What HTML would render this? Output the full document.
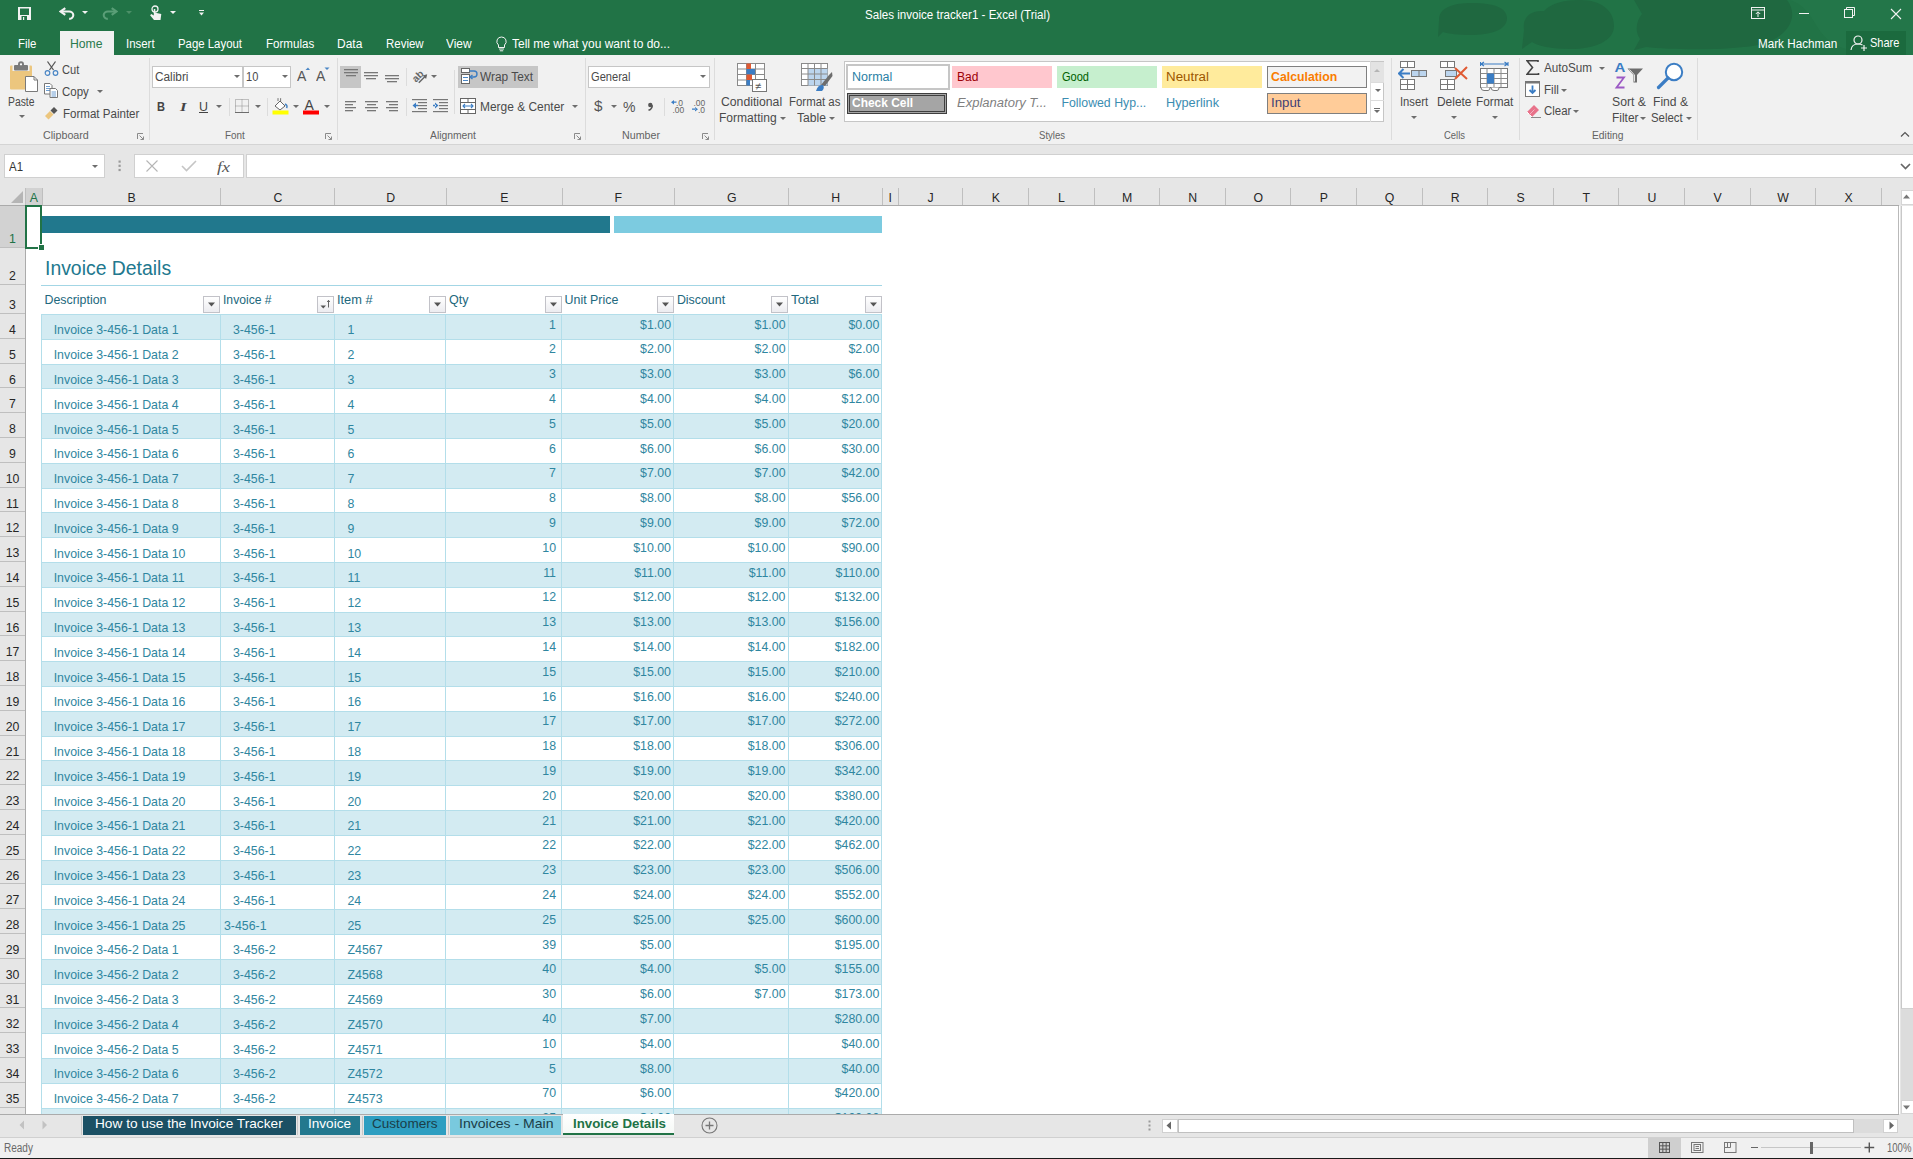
<!DOCTYPE html>
<html><head><meta charset="utf-8"><title>Sales invoice tracker1 - Excel</title>
<style>
html,body{margin:0;padding:0;}
body{width:1913px;height:1159px;overflow:hidden;position:relative;background:#fff;font-family:'Liberation Sans',sans-serif;}
svg{display:block;}
</style></head><body>
<div style="position:absolute;left:0px;top:0px;width:1913px;height:55px;background:#217346;"></div><svg style="position:absolute;left:1380px;top:0px;" width="533" height="55" viewBox="0 0 533 55">
<g fill="#1f6840">
<path d="M59 20 C59 7 74 3 92 3 C114 3 127 8 127 18 C127 30 111 35 90 35 C78 35 69 34 63 32 L58 37 Z"/>
<path d="M144 30 C142 16 152 10 164 11 C171 3 185 0 200 0 C222 0 234 11 234 26 C234 41 215 49 190 49 C171 49 158 46 152 42 L142 49 Z"/>
<path d="M254 0 L407 0 C418 14 412 34 384 44 C352 51 292 50 266 47 L254 50 L260 39 C254 30 257 20 262 14 Z"/>
</g>
<g fill="#25784a" opacity="0.7"><path d="M410 0 C440 10 430 40 470 50 L533 55 L533 0 Z"/></g>
</svg><svg style="position:absolute;left:17px;top:6px;" width="15" height="15" viewBox="0 0 15 15"><path d="M1 1h13v13H1z" fill="#f2f2f2"/><rect x="3" y="2.5" width="9" height="6.5" fill="#217346"/><rect x="4.5" y="10" width="5.5" height="4" fill="#217346"/><rect x="6" y="11" width="1.2" height="3" fill="#f2f2f2"/></svg><svg style="position:absolute;left:59px;top:7px;" width="16" height="14" viewBox="0 0 16 14"><path d="M6.3 1.2 L1.6 4.5 L6.3 7.8" stroke="#f2f2f2" stroke-width="2.1" fill="none" stroke-linejoin="miter"/><path d="M2 4.5 H10 A4.2 3.7 0 0 1 10.2 11.9" stroke="#f2f2f2" stroke-width="2.1" fill="none"/></svg><svg style="position:absolute;left:82px;top:11px;" width="7" height="4" viewBox="0 0 7 4"><path d="M0 0h6L3 3z" fill="#f2f2f2"/></svg><svg style="position:absolute;left:102px;top:7px;" width="16" height="14" viewBox="0 0 16 14"><g transform="translate(16 0) scale(-1 1)"><path d="M6.3 1.2 L1.6 4.5 L6.3 7.8" stroke="#5a9e77" stroke-width="2.1" fill="none"/><path d="M2 4.5 H10 A4.2 3.7 0 0 1 10.2 11.9" stroke="#5a9e77" stroke-width="2.1" fill="none"/></g></svg><svg style="position:absolute;left:126px;top:11px;" width="7" height="4" viewBox="0 0 7 4"><path d="M0 0h6L3 3z" fill="#4d9068"/></svg><svg style="position:absolute;left:149px;top:5px;" width="13" height="16" viewBox="0 0 13 16"><circle cx="6" cy="4" r="3" stroke="#f2f2f2" stroke-width="1.3" fill="none"/><path d="M4.8 4 v6.5 l-2.5-1.5 -1.2 1.2 L5 15 h6.5 l0.8-6 -6-1.2 V4z" fill="#f2f2f2"/></svg><svg style="position:absolute;left:170px;top:11px;" width="7" height="4" viewBox="0 0 7 4"><path d="M0 0h6L3 3z" fill="#f2f2f2"/></svg><svg style="position:absolute;left:199px;top:10px;" width="6" height="7" viewBox="0 0 6 7"><rect x="0" y="0" width="5" height="1" fill="#f2f2f2"/><path d="M0 2.5h5L2.5 5.5z" fill="#f2f2f2"/></svg><svg style="position:absolute;left:1751px;top:7px;" width="15" height="12" viewBox="0 0 15 12"><rect x="0.5" y="0.5" width="13" height="11" stroke="#f2f2f2" fill="none"/><line x1="0.5" y1="3" x2="13.5" y2="3" stroke="#f2f2f2"/><path d="M7 10 V5 M4.8 7 L7 4.8 9.2 7" stroke="#f2f2f2" fill="none"/></svg><div style="position:absolute;left:1799px;top:13px;width:10px;height:1px;background:#f2f2f2;"></div><svg style="position:absolute;left:1844px;top:7px;" width="12" height="12" viewBox="0 0 12 12"><rect x="0.5" y="2.5" width="8" height="8" stroke="#f2f2f2" fill="none"/><path d="M2.5 2.5 V0.5 H10.5 V8.5 H8.5" stroke="#f2f2f2" fill="none"/></svg><svg style="position:absolute;left:1890px;top:8px;" width="12" height="12" viewBox="0 0 12 12"><path d="M1 1 L11 11 M11 1 L1 11" stroke="#f2f2f2" stroke-width="1.1"/></svg><div style="position:absolute;left:60px;top:31px;width:54px;height:24px;background:#f1f1f1;"></div><svg style="position:absolute;left:495px;top:36px;" width="13" height="16" viewBox="0 0 13 16"><path d="M6.5 1 A4.5 4.5 0 0 0 3.5 9 V11.5 H9.5 V9 A4.5 4.5 0 0 0 6.5 1 Z" stroke="#f2f2f2" stroke-width="1" fill="none"/><path d="M4 13 H9 M4.8 14.8 H8.2" stroke="#f2f2f2" stroke-width="1"/></svg><div style="position:absolute;left:1846px;top:31px;width:59.6px;height:24px;background:#1b6a3e;"></div><svg style="position:absolute;left:1850px;top:34px;" width="19" height="18" viewBox="0 0 19 18"><circle cx="8" cy="6" r="4" stroke="#f2f2f2" stroke-width="1.2" fill="none"/><path d="M1 16 C1.5 11.5 4 10 8 10 C10 10 11.5 10.4 12.5 11" stroke="#f2f2f2" stroke-width="1.2" fill="none"/><path d="M14 11 v6 M11 14 h6" stroke="#f2f2f2" stroke-width="1.2"/></svg><div style="position:absolute;left:0px;top:55px;width:1913px;height:89px;background:#f1f1f1;"></div><div style="position:absolute;left:0px;top:144px;width:1913px;height:1px;background:#d4d4d4;"></div><svg style="position:absolute;left:9px;top:61px;" width="30" height="31" viewBox="0 0 30 31"><rect x="1" y="4.5" width="22" height="24" rx="1" fill="#ecc67e"/><rect x="3.5" y="3" width="17" height="7" fill="#f1f1f1"/><rect x="5" y="4" width="14" height="5.5" rx="1" fill="#7a7a7a"/><circle cx="12" cy="3.2" r="3" fill="#7a7a7a"/><circle cx="12" cy="3.3" r="1.1" fill="#ffffff"/>
<path d="M16.5 15.5 H25 L28.5 19 V30.5 H16.5 Z" fill="#fff" stroke="#7a7a7a" stroke-width="1"/><path d="M25 15.5 V19 H28.5" fill="none" stroke="#7a7a7a" stroke-width="1"/></svg><svg style="position:absolute;left:18.5px;top:115.0px;" width="6" height="4" viewBox="0 0 6 4"><path d="M0 0h6L3 3z" fill="#6d6d6d"/></svg><svg style="position:absolute;left:44px;top:61px;" width="15" height="15" viewBox="0 0 15 15"><path d="M3.5 0.5 L9.5 9 M11.5 0.5 L5.5 9" stroke="#555" stroke-width="1.3"/><circle cx="3.5" cy="12" r="2.3" stroke="#4a86c5" stroke-width="1.2" fill="none"/><circle cx="11.5" cy="12" r="2.3" stroke="#4a86c5" stroke-width="1.2" fill="none"/></svg><svg style="position:absolute;left:44px;top:83px;" width="15" height="15" viewBox="0 0 15 15"><path d="M0.5 0.5H6L8 2.5V11H0.5Z" fill="#fff" stroke="#777"/><path d="M2 3.5h4 M2 5.5h4 M2 7.5h4" stroke="#4a86c5" stroke-width="0.8"/><path d="M6 5.5H11.5L13.5 7.5V14.5H6Z" fill="#fff" stroke="#777"/><path d="M7.5 9h4.5 M7.5 11h4.5 M7.5 13h4.5" stroke="#4a86c5" stroke-width="0.8"/></svg><svg style="position:absolute;left:97px;top:89.5px;" width="6" height="4" viewBox="0 0 6 4"><path d="M0 0h6L3 3z" fill="#6d6d6d"/></svg><svg style="position:absolute;left:44px;top:107px;" width="15" height="13" viewBox="0 0 15 13"><path d="M1 9 L6 4 L9.5 7.5 L4.5 12.5 Z" fill="#ecc67e"/><path d="M6.5 3.5 L10 7 L13.5 3.5 L10 0 Z" fill="#555"/></svg><svg style="position:absolute;left:137px;top:133px;" width="7" height="7" viewBox="0 0 7 7"><path d="M0.5 6V0.5H6" stroke="#8a8a8a" fill="none"/><path d="M2.5 2.5L6.5 6.5M6.5 3.5V6.5H3.5" stroke="#8a8a8a" fill="none"/></svg><div style="position:absolute;left:148.5px;top:58px;width:1px;height:82px;background:#dcdcdc;"></div><div style="position:absolute;left:152px;top:66px;width:91px;height:22px;background:#ffffff;box-sizing:border-box;border:1px solid #c6c6c6;"></div><div style="position:absolute;left:243px;top:66px;width:48px;height:22px;background:#ffffff;box-sizing:border-box;border:1px solid #c6c6c6;"></div><svg style="position:absolute;left:233.7px;top:74.5px;" width="6" height="4" viewBox="0 0 6 4"><path d="M0 0h6L3 3z" fill="#6d6d6d"/></svg><svg style="position:absolute;left:281.6px;top:74.5px;" width="6" height="4" viewBox="0 0 6 4"><path d="M0 0h6L3 3z" fill="#6d6d6d"/></svg><svg style="position:absolute;left:297px;top:67px;" width="13" height="14" viewBox="0 0 13 14"><text x="0" y="13.5" font-family="Liberation Sans" font-size="14" fill="#555">A</text><path d="M8.5 3 L11 0.5 L13 3Z" fill="#4a86c5"/></svg><svg style="position:absolute;left:316px;top:67px;" width="14" height="14" viewBox="0 0 14 14"><text x="0" y="13.5" font-family="Liberation Sans" font-size="14" fill="#555">A</text><path d="M8.5 0.5 L11 3 L13.5 0.5Z" fill="#4a86c5"/></svg><div style="position:absolute;left:199px;top:112px;width:9px;height:1px;background:#444;"></div><svg style="position:absolute;left:216px;top:104.5px;" width="6" height="4" viewBox="0 0 6 4"><path d="M0 0h6L3 3z" fill="#6d6d6d"/></svg><div style="position:absolute;left:228.5px;top:98px;width:1px;height:18px;background:#dcdcdc;"></div><svg style="position:absolute;left:235px;top:99px;" width="14" height="14" viewBox="0 0 14 14"><path d="M0.5 0.5H13.5V13.5H0.5Z M7 0.5V13.5 M0.5 7H13.5" stroke="#8a8a8a" stroke-dasharray="1 1" fill="none"/><path d="M0 13.5H14" stroke="#6d6d6d"/></svg><svg style="position:absolute;left:254.5px;top:104.5px;" width="6" height="4" viewBox="0 0 6 4"><path d="M0 0h6L3 3z" fill="#6d6d6d"/></svg><div style="position:absolute;left:266.5px;top:98px;width:1px;height:18px;background:#dcdcdc;"></div><svg style="position:absolute;left:272px;top:98px;" width="18" height="17" viewBox="0 0 18 17"><path d="M3 8 L8 3 L13 8 L8 12 Z" fill="#fff" stroke="#666" stroke-width="1"/><path d="M6 3 V0.5 a1.3 1.3 0 0 1 2.6 0 V4" stroke="#666" fill="none" stroke-width="0.9"/><path d="M13 6 Q16 7.5 14.5 10" stroke="#4a86c5" stroke-width="1.6" fill="none"/><rect x="0.5" y="12.5" width="16" height="4" fill="#ffff00"/></svg><svg style="position:absolute;left:293px;top:104.5px;" width="6" height="4" viewBox="0 0 6 4"><path d="M0 0h6L3 3z" fill="#6d6d6d"/></svg><svg style="position:absolute;left:303px;top:98px;" width="17" height="17" viewBox="0 0 17 17"><text x="1.5" y="12" font-family="Liberation Sans" font-size="14" fill="#444">A</text><rect x="0" y="12.5" width="16" height="4" fill="#ff0000"/></svg><svg style="position:absolute;left:324px;top:104.5px;" width="6" height="4" viewBox="0 0 6 4"><path d="M0 0h6L3 3z" fill="#6d6d6d"/></svg><svg style="position:absolute;left:325px;top:133px;" width="7" height="7" viewBox="0 0 7 7"><path d="M0.5 6V0.5H6" stroke="#8a8a8a" fill="none"/><path d="M2.5 2.5L6.5 6.5M6.5 3.5V6.5H3.5" stroke="#8a8a8a" fill="none"/></svg><div style="position:absolute;left:336.5px;top:58px;width:1px;height:82px;background:#dcdcdc;"></div><div style="position:absolute;left:340px;top:66px;width:21px;height:22px;background:#c6c6c6;"></div><svg style="position:absolute;left:344px;top:69px;" width="16" height="10" viewBox="0 0 16 10"><rect x="0" y="0" width="14" height="1.3" fill="#777"/><rect x="0" y="3" width="14" height="1.3" fill="#777"/><rect x="2" y="6" width="10" height="1.3" fill="#777"/></svg><svg style="position:absolute;left:364px;top:72px;" width="16" height="10" viewBox="0 0 16 10"><rect x="0" y="0" width="14" height="1.3" fill="#777"/><rect x="0" y="3" width="14" height="1.3" fill="#777"/><rect x="2" y="6" width="10" height="1.3" fill="#777"/></svg><svg style="position:absolute;left:385px;top:75px;" width="16" height="10" viewBox="0 0 16 10"><rect x="0" y="0" width="14" height="1.3" fill="#777"/><rect x="0" y="3" width="14" height="1.3" fill="#777"/><rect x="2" y="6" width="10" height="1.3" fill="#777"/></svg><div style="position:absolute;left:405.7px;top:68px;width:1px;height:18px;background:#dcdcdc;"></div><svg style="position:absolute;left:411px;top:68px;" width="18" height="17" viewBox="0 0 18 17"><text x="1" y="12.2" font-family="Liberation Sans" font-size="10" font-weight="700" fill="#666" transform="rotate(-45 6 8.5)">ab</text><path d="M7.8 14.8 L14.5 8" stroke="#666" stroke-width="1.5"/><path d="M16.2 6.3 L11.6 7.4 L15.1 10.9 Z" fill="#666"/></svg><svg style="position:absolute;left:430.5px;top:74.5px;" width="6" height="4" viewBox="0 0 6 4"><path d="M0 0h6L3 3z" fill="#6d6d6d"/></svg><svg style="position:absolute;left:344.5px;top:101px;" width="16" height="13" viewBox="0 0 16 13"><rect x="0" y="0" width="11" height="1.3" fill="#777"/><rect x="0" y="3" width="8" height="1.3" fill="#777"/><rect x="0" y="6" width="11" height="1.3" fill="#777"/><rect x="0" y="9" width="8" height="1.3" fill="#777"/></svg><svg style="position:absolute;left:364.5px;top:101px;" width="16" height="13" viewBox="0 0 16 13"><rect x="0" y="0" width="13" height="1.3" fill="#777"/><rect x="2" y="3" width="9" height="1.3" fill="#777"/><rect x="0" y="6" width="13" height="1.3" fill="#777"/><rect x="2" y="9" width="9" height="1.3" fill="#777"/></svg><svg style="position:absolute;left:386px;top:101px;" width="16" height="13" viewBox="0 0 16 13"><rect x="0" y="0" width="12" height="1.3" fill="#777"/><rect x="3" y="3" width="9" height="1.3" fill="#777"/><rect x="0" y="6" width="12" height="1.3" fill="#777"/><rect x="3" y="9" width="9" height="1.3" fill="#777"/></svg><div style="position:absolute;left:405.8px;top:98px;width:1px;height:18px;background:#dcdcdc;"></div><svg style="position:absolute;left:412px;top:99px;" width="16" height="14" viewBox="0 0 16 14"><rect x="0" y="0" width="15" height="1.2" fill="#777"/><rect x="6" y="3" width="9" height="1.2" fill="#777"/><rect x="6" y="6" width="9" height="1.2" fill="#777"/><rect x="6" y="9" width="9" height="1.2" fill="#777"/><rect x="0" y="12" width="15" height="1.2" fill="#777"/><path d="M0.5 6.5 L4 3.5 V9.5Z M3 5.8h3v1.4h-3z" fill="#3b7dc4"/></svg><svg style="position:absolute;left:433px;top:99px;" width="16" height="14" viewBox="0 0 16 14"><rect x="0" y="0" width="15" height="1.2" fill="#777"/><rect x="6" y="3" width="9" height="1.2" fill="#777"/><rect x="6" y="6" width="9" height="1.2" fill="#777"/><rect x="6" y="9" width="9" height="1.2" fill="#777"/><rect x="0" y="12" width="15" height="1.2" fill="#777"/><path d="M5.5 6.5 L2 3.5 V9.5Z M0 5.8h3v1.4h-3z" fill="#3b7dc4"/></svg><div style="position:absolute;left:454.4px;top:70px;width:1px;height:44px;background:#dcdcdc;"></div><div style="position:absolute;left:458px;top:66px;width:80px;height:22px;background:#c6c6c6;"></div><svg style="position:absolute;left:461px;top:68px;" width="17" height="17" viewBox="0 0 17 17"><rect x="0.5" y="0.5" width="8" height="4" fill="#fff" stroke="#666"/><rect x="0.5" y="6.5" width="8" height="9" fill="#fff" stroke="#666"/><path d="M2 9.5h5 M2 12.5h5" stroke="#4a86c5"/><path d="M8.5 3 H13 A3 3 0 0 1 13 9 H10" stroke="#3b7dc4" stroke-width="1.4" fill="none"/><path d="M11.5 7 L9 9 L11.5 11" stroke="#3b7dc4" stroke-width="1.4" fill="none"/></svg><svg style="position:absolute;left:460px;top:98px;" width="17" height="17" viewBox="0 0 17 17"><rect x="0.5" y="0.5" width="15" height="15" fill="#fff" stroke="#666"/><path d="M0.5 4.5H15.5 M0.5 11.5H15.5 M8 0.5V4.5 M8 11.5V15.5" stroke="#666"/><path d="M3 8H13 M5 6L3 8L5 10 M11 6L13 8L11 10" stroke="#3b7dc4" stroke-width="1.1" fill="none"/></svg><svg style="position:absolute;left:571.5px;top:104.5px;" width="6" height="4" viewBox="0 0 6 4"><path d="M0 0h6L3 3z" fill="#6d6d6d"/></svg><svg style="position:absolute;left:573.5px;top:133px;" width="7" height="7" viewBox="0 0 7 7"><path d="M0.5 6V0.5H6" stroke="#8a8a8a" fill="none"/><path d="M2.5 2.5L6.5 6.5M6.5 3.5V6.5H3.5" stroke="#8a8a8a" fill="none"/></svg><div style="position:absolute;left:584.5px;top:58px;width:1px;height:82px;background:#dcdcdc;"></div><div style="position:absolute;left:588px;top:66px;width:122px;height:22px;background:#ffffff;box-sizing:border-box;border:1px solid #c6c6c6;"></div><svg style="position:absolute;left:700px;top:74.5px;" width="6" height="4" viewBox="0 0 6 4"><path d="M0 0h6L3 3z" fill="#6d6d6d"/></svg><svg style="position:absolute;left:610.5px;top:104.5px;" width="6" height="4" viewBox="0 0 6 4"><path d="M0 0h6L3 3z" fill="#6d6d6d"/></svg><svg style="position:absolute;left:647px;top:102px;" width="7" height="9" viewBox="0 0 7 9"><circle cx="3.3" cy="3" r="2.2" fill="#555"/><path d="M5.3 3.2 Q5.3 7 1.5 8.3" stroke="#555" stroke-width="1.5" fill="none"/></svg><div style="position:absolute;left:664px;top:98px;width:1px;height:18px;background:#dcdcdc;"></div><svg style="position:absolute;left:671px;top:99px;" width="15" height="15" viewBox="0 0 15 15"><text x="5" y="6.5" font-family="Liberation Sans" font-size="8.5" fill="#666">.0</text><text x="1.5" y="14" font-family="Liberation Sans" font-size="8.5" fill="#666">.00</text><path d="M0 3.2 L3 1 V5.4Z M2.5 2.6h3v1.2h-3z" fill="#3b7dc4"/></svg><svg style="position:absolute;left:692px;top:99px;" width="15" height="15" viewBox="0 0 15 15"><text x="1.5" y="7" font-family="Liberation Sans" font-size="8.5" fill="#666">.00</text><text x="6" y="14" font-family="Liberation Sans" font-size="8.5" fill="#666">.0</text><path d="M6 10.2 L3 8 V12.4Z M0 9.6h3.5v1.2h-3.5z" fill="#3b7dc4"/></svg><svg style="position:absolute;left:702px;top:133px;" width="7" height="7" viewBox="0 0 7 7"><path d="M0.5 6V0.5H6" stroke="#8a8a8a" fill="none"/><path d="M2.5 2.5L6.5 6.5M6.5 3.5V6.5H3.5" stroke="#8a8a8a" fill="none"/></svg><div style="position:absolute;left:713.5px;top:58px;width:1px;height:82px;background:#dcdcdc;"></div><svg style="position:absolute;left:737px;top:63px;" width="32" height="30" viewBox="0 0 32 30"><g stroke="#8a8a8a" fill="#fff"><rect x="0.5" y="0.5" width="27" height="22"/></g>
<path d="M0.5 6h27 M0.5 11.5h27 M0.5 17h27 M9.5 0.5v22 M18.5 0.5v22" stroke="#8a8a8a"/>
<rect x="9.5" y="0.5" width="4.5" height="5.5" fill="#e05a33"/><rect x="9.5" y="6" width="8.5" height="5.5" fill="#3b7dc4"/><rect x="9.5" y="11.5" width="5.5" height="5.5" fill="#e05a33"/><rect x="9.5" y="17" width="3.5" height="5.5" fill="#3b7dc4"/>
<rect x="15.5" y="16.5" width="14" height="12" fill="#fff" stroke="#777"/><text x="18" y="27" font-family="Liberation Sans" font-size="11" fill="#555">≠</text></svg><svg style="position:absolute;left:780px;top:116.5px;" width="6" height="4" viewBox="0 0 6 4"><path d="M0 0h6L3 3z" fill="#6d6d6d"/></svg><svg style="position:absolute;left:801px;top:63px;" width="32" height="30" viewBox="0 0 32 30"><rect x="0.5" y="0.5" width="26" height="22" fill="#fff" stroke="#8a8a8a"/>
<rect x="7" y="5.5" width="19.5" height="17" fill="#bcd5ee"/>
<path d="M0.5 5.5h26 M0.5 11h26 M0.5 16.5h26 M7 0.5v22 M13.5 0.5v22 M20 0.5v22" stroke="#8a8a8a"/>
<path d="M20 22 L28 12 L31 9 L31.5 13 L24 23 Z" fill="#6d6d6d"/><path d="M15 28 Q17 21 22 22 Q24 25 21 28 Z" fill="#3b7dc4"/></svg><svg style="position:absolute;left:829px;top:116.5px;" width="6" height="4" viewBox="0 0 6 4"><path d="M0 0h6L3 3z" fill="#6d6d6d"/></svg><div style="position:absolute;left:844px;top:60.5px;width:540px;height:61px;background:#ffffff;box-sizing:border-box;border:1px solid #c6c6c6;"></div><div style="position:absolute;left:846px;top:64px;width:104px;height:26px;background:#ffffff;box-sizing:border-box;border:2px solid #c6c6c6;"></div><div style="position:absolute;left:952px;top:66px;width:100.2px;height:22px;background:#ffc7ce;"></div><div style="position:absolute;left:1057px;top:66px;width:100px;height:22px;background:#c6efce;"></div><div style="position:absolute;left:1161.8px;top:66px;width:100.1px;height:22px;background:#ffeb9c;"></div><div style="position:absolute;left:1266.6px;top:66px;width:100px;height:21.6px;background:#f2f2f2;box-sizing:border-box;border:1px solid #7f7f7f;"></div><div style="position:absolute;left:847px;top:92.8px;width:100px;height:21.2px;background:#a5a5a5;box-sizing:border-box;border:3px double #3f3f3f;"></div><div style="position:absolute;left:1266.6px;top:92.9px;width:100px;height:20.8px;background:#ffcc99;box-sizing:border-box;border:1px solid #7f7f7f;"></div><div style="position:absolute;left:1370.4px;top:60.5px;width:1px;height:61px;background:#dcdcdc;"></div><div style="position:absolute;left:1371px;top:61.5px;width:12.5px;height:20px;background:#e3e3e3;"></div><svg style="position:absolute;left:1374px;top:69px;" width="7" height="4" viewBox="0 0 7 4"><path d="M0 3h6L3 0z" fill="#b5b5b5"/></svg><div style="position:absolute;left:1371px;top:81.5px;width:12.5px;height:1px;background:#dcdcdc;"></div><svg style="position:absolute;left:1374.5px;top:89.0px;" width="6" height="4" viewBox="0 0 6 4"><path d="M0 0h6L3 3z" fill="#6d6d6d"/></svg><div style="position:absolute;left:1371px;top:99.5px;width:12.5px;height:1px;background:#dcdcdc;"></div><svg style="position:absolute;left:1374px;top:108px;" width="7" height="6" viewBox="0 0 7 6"><rect x="0" y="0" width="6" height="1" fill="#6d6d6d"/><path d="M0 2h6L3 5z" fill="#6d6d6d"/></svg><div style="position:absolute;left:1390.5px;top:58px;width:1px;height:82px;background:#dcdcdc;"></div><svg style="position:absolute;left:1398px;top:61px;" width="31" height="30" viewBox="0 0 31 30"><rect x="2.5" y="0.5" width="14" height="6" fill="#fff" stroke="#777"/><path d="M9.5 0.5v6" stroke="#777"/>
<rect x="13.5" y="9.5" width="15" height="6" fill="#bcd5ee" stroke="#777"/><path d="M21 9.5v6" stroke="#777"/>
<path d="M1 12.5 H12 M5.5 8 L1 12.5 L5.5 17" stroke="#3b7dc4" stroke-width="2" fill="none"/>
<rect x="2.5" y="18.5" width="14" height="10" fill="#fff" stroke="#777"/><path d="M9.5 18.5v10 M2.5 23.5h14" stroke="#777"/></svg><svg style="position:absolute;left:1410.7px;top:115.8px;" width="6" height="4" viewBox="0 0 6 4"><path d="M0 0h6L3 3z" fill="#6d6d6d"/></svg><svg style="position:absolute;left:1440px;top:61px;" width="32" height="30" viewBox="0 0 32 30"><rect x="0.5" y="0.5" width="14" height="6" fill="#fff" stroke="#777"/><path d="M7.5 0.5v6" stroke="#777"/>
<rect x="5.5" y="9.5" width="11" height="6" fill="#bcd5ee" stroke="#777"/>
<rect x="0.5" y="18.5" width="14" height="10" fill="#fff" stroke="#777"/><path d="M7.5 18.5v10 M0.5 23.5h14" stroke="#777"/>
<path d="M15 7 L27 18 M27 6 L15 18" stroke="#e05a33" stroke-width="2"/></svg><svg style="position:absolute;left:1450.6px;top:115.8px;" width="6" height="4" viewBox="0 0 6 4"><path d="M0 0h6L3 3z" fill="#6d6d6d"/></svg><svg style="position:absolute;left:1480px;top:61px;" width="30" height="30" viewBox="0 0 30 30"><path d="M0.5 1v4 M28 1v4 M1 3 H27.5 M4 1 L1 3 L4 5 M24.5 1 L27.5 3 L24.5 5" stroke="#3b7dc4" stroke-width="1.1" fill="none"/>
<rect x="0.5" y="7.5" width="27" height="19" fill="#fff" stroke="#777"/>
<path d="M0.5 12.5h27 M0.5 17.5h27 M0.5 22.5h27 M7 7.5v19 M14 7.5v19 M21 7.5v19" stroke="#8a8a8a"/>
<rect x="7" y="12.5" width="7" height="10" fill="#3b7dc4"/>
<path d="M1 26.5 Q1 29.5 4 29.5 H8 Q10 29.5 10 26.5 M11 26.5 Q11 29.5 14 29.5 H17 Q19 29.5 19 26.5" stroke="#777" fill="#fff"/></svg><svg style="position:absolute;left:1491.6px;top:115.8px;" width="6" height="4" viewBox="0 0 6 4"><path d="M0 0h6L3 3z" fill="#6d6d6d"/></svg><div style="position:absolute;left:1519.3px;top:58px;width:1px;height:82px;background:#dcdcdc;"></div><svg style="position:absolute;left:1526px;top:60px;" width="14" height="15" viewBox="0 0 14 15"><path d="M12 2 V0.8 H1 L6.5 7.5 L1 14.2 H12.5 V13" stroke="#444" stroke-width="1.6" fill="none"/></svg><svg style="position:absolute;left:1599px;top:66.5px;" width="6" height="4" viewBox="0 0 6 4"><path d="M0 0h6L3 3z" fill="#6d6d6d"/></svg><svg style="position:absolute;left:1525px;top:81px;" width="16" height="17" viewBox="0 0 16 17"><rect x="0.5" y="0.5" width="14" height="15" fill="#fff" stroke="#777"/><rect x="0.5" y="0.5" width="14" height="2" fill="#777"/><path d="M7.5 4.5 V12 M4.5 9 L7.5 12 L10.5 9" stroke="#3b7dc4" stroke-width="1.8" fill="none"/></svg><svg style="position:absolute;left:1561px;top:88.5px;" width="6" height="4" viewBox="0 0 6 4"><path d="M0 0h6L3 3z" fill="#6d6d6d"/></svg><svg style="position:absolute;left:1526px;top:103px;" width="16" height="15" viewBox="0 0 16 15"><path d="M1 9 L8 2 L13 7 L6 14 Z" fill="#e8728a"/><path d="M1 9 L6 14" stroke="#fff" stroke-width="1"/><path d="M3.5 11.5 L8.5 6.5" stroke="#f3b5c2" stroke-width="1"/><path d="M5 14.5 H15" stroke="#8a8a8a" stroke-width="1"/></svg><svg style="position:absolute;left:1573px;top:109.5px;" width="6" height="4" viewBox="0 0 6 4"><path d="M0 0h6L3 3z" fill="#6d6d6d"/></svg><svg style="position:absolute;left:1614px;top:62px;" width="31" height="28" viewBox="0 0 31 28"><text x="0.5" y="12.2" font-family="Liberation Sans" font-size="15" font-weight="700" fill="#3b7dc4" transform="scale(1 0.85)" style="transform-origin:0 0">A</text><path d="M2.5 15.5 H10 L2.5 25.5 H10.5" stroke="#9b59c4" stroke-width="1.8" fill="none"/>
<path d="M13.5 6.5 H29 L23 13 V20.5 H19.5 V13 Z" fill="#6d6d6d"/><path d="M15.5 7.5 L20.5 13 V19.5" stroke="#f1f1f1" stroke-width="0.9" fill="none"/></svg><svg style="position:absolute;left:1640px;top:116.5px;" width="6" height="4" viewBox="0 0 6 4"><path d="M0 0h6L3 3z" fill="#6d6d6d"/></svg><svg style="position:absolute;left:1656px;top:61px;" width="30" height="30" viewBox="0 0 30 30"><circle cx="18" cy="11" r="8.2" stroke="#3b7dc4" stroke-width="2" fill="#fff"/><path d="M12 17 L2.5 26.5" stroke="#3b7dc4" stroke-width="3.2" stroke-linecap="round"/></svg><svg style="position:absolute;left:1685.5px;top:116.5px;" width="6" height="4" viewBox="0 0 6 4"><path d="M0 0h6L3 3z" fill="#6d6d6d"/></svg><div style="position:absolute;left:1696.5px;top:58px;width:1px;height:82px;background:#dcdcdc;"></div><svg style="position:absolute;left:1900px;top:131px;" width="10" height="7" viewBox="0 0 10 7"><path d="M1 5.5 L5 1.5 L9 5.5" stroke="#555" stroke-width="1.2" fill="none"/></svg><div style="position:absolute;left:0px;top:145px;width:1913px;height:61px;background:#e6e6e6;"></div><div style="position:absolute;left:3.5px;top:154px;width:101px;height:23.6px;background:#ffffff;box-sizing:border-box;border:1px solid #d0d0d0;"></div><svg style="position:absolute;left:91.5px;top:164.5px;" width="6" height="4" viewBox="0 0 6 4"><path d="M0 0h6L3 3z" fill="#6d6d6d"/></svg><svg style="position:absolute;left:117.5px;top:160px;" width="4" height="12" viewBox="0 0 4 12"><rect x="0.5" y="0.5" width="2.2" height="2.2" fill="#9a9a9a"/><rect x="0.5" y="4.7" width="2.2" height="2.2" fill="#9a9a9a"/><rect x="0.5" y="8.9" width="2.2" height="2.2" fill="#9a9a9a"/></svg><div style="position:absolute;left:134px;top:154px;width:109.5px;height:23.6px;background:#ffffff;box-sizing:border-box;border:1px solid #d0d0d0;"></div><svg style="position:absolute;left:145px;top:159px;" width="14" height="14" viewBox="0 0 14 14"><path d="M1.5 1.5 L12.5 12.5 M12.5 1.5 L1.5 12.5" stroke="#b5b5b5" stroke-width="1.1"/></svg><svg style="position:absolute;left:181px;top:160px;" width="16" height="12" viewBox="0 0 16 12"><path d="M1 6 L5.5 10.5 L15 1" stroke="#c5c5c5" stroke-width="1.6" fill="none"/></svg><div style="position:absolute;left:246px;top:154px;width:1667px;height:23.6px;background:#ffffff;box-sizing:border-box;border:1px solid #d0d0d0;border-right:none;"></div><svg style="position:absolute;left:1900px;top:163px;" width="11" height="7" viewBox="0 0 11 7"><path d="M1 1 L5.5 5.5 L10 1" stroke="#666" stroke-width="1.7" fill="none"/></svg><div style="position:absolute;left:0px;top:205px;width:1899px;height:1px;background:#ababab;"></div><svg style="position:absolute;left:11px;top:191px;" width="13" height="12" viewBox="0 0 13 12"><path d="M12 0 V12 H0 Z" fill="#b5b5b5"/></svg><div style="position:absolute;left:25px;top:188px;width:16.5px;height:17px;background:#d2d2d2;"></div><div style="position:absolute;left:42px;top:188px;width:1px;height:17px;background:#bfbfbf;"></div><div style="position:absolute;left:220px;top:188px;width:1px;height:17px;background:#bfbfbf;"></div><div style="position:absolute;left:334px;top:188px;width:1px;height:17px;background:#bfbfbf;"></div><div style="position:absolute;left:446px;top:188px;width:1px;height:17px;background:#bfbfbf;"></div><div style="position:absolute;left:562px;top:188px;width:1px;height:17px;background:#bfbfbf;"></div><div style="position:absolute;left:674px;top:188px;width:1px;height:17px;background:#bfbfbf;"></div><div style="position:absolute;left:788px;top:188px;width:1px;height:17px;background:#bfbfbf;"></div><div style="position:absolute;left:882px;top:188px;width:1px;height:17px;background:#bfbfbf;"></div><div style="position:absolute;left:898px;top:188px;width:1px;height:17px;background:#bfbfbf;"></div><div style="position:absolute;left:962px;top:188px;width:1px;height:17px;background:#bfbfbf;"></div><div style="position:absolute;left:1028px;top:188px;width:1px;height:17px;background:#bfbfbf;"></div><div style="position:absolute;left:1094px;top:188px;width:1px;height:17px;background:#bfbfbf;"></div><div style="position:absolute;left:1159px;top:188px;width:1px;height:17px;background:#bfbfbf;"></div><div style="position:absolute;left:1225px;top:188px;width:1px;height:17px;background:#bfbfbf;"></div><div style="position:absolute;left:1290px;top:188px;width:1px;height:17px;background:#bfbfbf;"></div><div style="position:absolute;left:1356px;top:188px;width:1px;height:17px;background:#bfbfbf;"></div><div style="position:absolute;left:1422px;top:188px;width:1px;height:17px;background:#bfbfbf;"></div><div style="position:absolute;left:1487px;top:188px;width:1px;height:17px;background:#bfbfbf;"></div><div style="position:absolute;left:1553px;top:188px;width:1px;height:17px;background:#bfbfbf;"></div><div style="position:absolute;left:1618px;top:188px;width:1px;height:17px;background:#bfbfbf;"></div><div style="position:absolute;left:1684px;top:188px;width:1px;height:17px;background:#bfbfbf;"></div><div style="position:absolute;left:1750px;top:188px;width:1px;height:17px;background:#bfbfbf;"></div><div style="position:absolute;left:1815px;top:188px;width:1px;height:17px;background:#bfbfbf;"></div><div style="position:absolute;left:1881px;top:188px;width:1px;height:17px;background:#bfbfbf;"></div><div style="position:absolute;left:25px;top:188px;width:1px;height:17px;background:#bfbfbf;"></div><div style="position:absolute;left:1899.5px;top:188px;width:13.5px;height:926px;background:#e6e6e6;"></div><div style="position:absolute;left:1898px;top:206px;width:1px;height:908px;background:#b9b9b9;"></div><div style="position:absolute;left:1901px;top:189.5px;width:12px;height:15px;background:#ffffff;box-sizing:border-box;border:1px solid #d5d5d5;border-right:none;"></div><svg style="position:absolute;left:1903px;top:194px;" width="8" height="5" viewBox="0 0 8 5"><path d="M0 4.5h7L3.5 0.5z" fill="#777"/></svg><div style="position:absolute;left:1901px;top:206px;width:12px;height:803px;background:#ffffff;box-sizing:border-box;border-left:1px solid #c8c8c8;border-bottom:1px solid #d0d0d0;"></div><div style="position:absolute;left:1901px;top:1009px;width:12px;height:91px;background:#dcdcdc;"></div><div style="position:absolute;left:1901px;top:1100px;width:12px;height:14px;background:#ffffff;box-sizing:border-box;border:1px solid #d5d5d5;border-right:none;"></div><svg style="position:absolute;left:1903px;top:1105px;" width="8" height="5" viewBox="0 0 8 5"><path d="M0 0.5h7L3.5 4.5z" fill="#777"/></svg><div style="position:absolute;left:25px;top:206px;width:1873px;height:908px;background:#ffffff;"></div><div style="position:absolute;left:0px;top:206px;width:25px;height:908px;background:#e6e6e6;"></div><div style="position:absolute;left:25px;top:206px;width:1px;height:908px;background:#ababab;"></div><div style="position:absolute;left:0px;top:206px;width:25px;height:41.5px;background:#d2d2d2;"></div><div style="position:absolute;left:0px;top:247px;width:25px;height:1px;background:#bfbfbf;"></div><div style="position:absolute;left:0px;top:284px;width:25px;height:1px;background:#bfbfbf;"></div><div style="position:absolute;left:0px;top:313px;width:25px;height:1px;background:#bfbfbf;"></div><div style="position:absolute;left:0px;top:338px;width:25px;height:1px;background:#bfbfbf;"></div><div style="position:absolute;left:0px;top:363px;width:25px;height:1px;background:#bfbfbf;"></div><div style="position:absolute;left:0px;top:387px;width:25px;height:1px;background:#bfbfbf;"></div><div style="position:absolute;left:0px;top:412px;width:25px;height:1px;background:#bfbfbf;"></div><div style="position:absolute;left:0px;top:437px;width:25px;height:1px;background:#bfbfbf;"></div><div style="position:absolute;left:0px;top:462px;width:25px;height:1px;background:#bfbfbf;"></div><div style="position:absolute;left:0px;top:487px;width:25px;height:1px;background:#bfbfbf;"></div><div style="position:absolute;left:0px;top:511px;width:25px;height:1px;background:#bfbfbf;"></div><div style="position:absolute;left:0px;top:536px;width:25px;height:1px;background:#bfbfbf;"></div><div style="position:absolute;left:0px;top:561px;width:25px;height:1px;background:#bfbfbf;"></div><div style="position:absolute;left:0px;top:586px;width:25px;height:1px;background:#bfbfbf;"></div><div style="position:absolute;left:0px;top:611px;width:25px;height:1px;background:#bfbfbf;"></div><div style="position:absolute;left:0px;top:635px;width:25px;height:1px;background:#bfbfbf;"></div><div style="position:absolute;left:0px;top:660px;width:25px;height:1px;background:#bfbfbf;"></div><div style="position:absolute;left:0px;top:685px;width:25px;height:1px;background:#bfbfbf;"></div><div style="position:absolute;left:0px;top:710px;width:25px;height:1px;background:#bfbfbf;"></div><div style="position:absolute;left:0px;top:735px;width:25px;height:1px;background:#bfbfbf;"></div><div style="position:absolute;left:0px;top:759px;width:25px;height:1px;background:#bfbfbf;"></div><div style="position:absolute;left:0px;top:784px;width:25px;height:1px;background:#bfbfbf;"></div><div style="position:absolute;left:0px;top:809px;width:25px;height:1px;background:#bfbfbf;"></div><div style="position:absolute;left:0px;top:834px;width:25px;height:1px;background:#bfbfbf;"></div><div style="position:absolute;left:0px;top:859px;width:25px;height:1px;background:#bfbfbf;"></div><div style="position:absolute;left:0px;top:883px;width:25px;height:1px;background:#bfbfbf;"></div><div style="position:absolute;left:0px;top:908px;width:25px;height:1px;background:#bfbfbf;"></div><div style="position:absolute;left:0px;top:933px;width:25px;height:1px;background:#bfbfbf;"></div><div style="position:absolute;left:0px;top:958px;width:25px;height:1px;background:#bfbfbf;"></div><div style="position:absolute;left:0px;top:983px;width:25px;height:1px;background:#bfbfbf;"></div><div style="position:absolute;left:0px;top:1007px;width:25px;height:1px;background:#bfbfbf;"></div><div style="position:absolute;left:0px;top:1032px;width:25px;height:1px;background:#bfbfbf;"></div><div style="position:absolute;left:0px;top:1057px;width:25px;height:1px;background:#bfbfbf;"></div><div style="position:absolute;left:0px;top:1082px;width:25px;height:1px;background:#bfbfbf;"></div><div style="position:absolute;left:0px;top:1107px;width:25px;height:1px;background:#bfbfbf;"></div><div style="position:absolute;left:41.5px;top:216px;width:568.1px;height:16.7px;background:#21788d;"></div><div style="position:absolute;left:613.8px;top:216px;width:268.2px;height:16.7px;background:#7ccbe0;"></div><div style="position:absolute;left:41px;top:284.6px;width:841px;height:1.2px;background:#a3d6e5;"></div><div style="position:absolute;left:203px;top:296px;width:17px;height:17px;background:linear-gradient(#ffffff,#ececf0);box-sizing:border-box;border:1px solid #c2c2c8;"></div><svg style="position:absolute;left:208.3px;top:302px;" width="7" height="5" viewBox="0 0 7 5"><path d="M0 0.5h7L3.5 4.5z" fill="#555"/></svg><div style="position:absolute;left:317px;top:296px;width:17px;height:17px;background:linear-gradient(#ffffff,#ececf0);box-sizing:border-box;border:1px solid #c2c2c8;"></div><svg style="position:absolute;left:320.3px;top:299px;" width="11" height="11" viewBox="0 0 11 11"><path d="M0.5 6.5h5.5L3.25 9.5z" fill="#555"/><path d="M8.5 1.5 V8.5 M7.2 3 L8.5 1.3 L9.8 3" stroke="#555" stroke-width="0.9" fill="none"/></svg><div style="position:absolute;left:429px;top:296px;width:17px;height:17px;background:linear-gradient(#ffffff,#ececf0);box-sizing:border-box;border:1px solid #c2c2c8;"></div><svg style="position:absolute;left:433.7px;top:302px;" width="7" height="5" viewBox="0 0 7 5"><path d="M0 0.5h7L3.5 4.5z" fill="#555"/></svg><div style="position:absolute;left:545px;top:296px;width:17px;height:17px;background:linear-gradient(#ffffff,#ececf0);box-sizing:border-box;border:1px solid #c2c2c8;"></div><svg style="position:absolute;left:549.6px;top:302px;" width="7" height="5" viewBox="0 0 7 5"><path d="M0 0.5h7L3.5 4.5z" fill="#555"/></svg><div style="position:absolute;left:657px;top:296px;width:17px;height:17px;background:linear-gradient(#ffffff,#ececf0);box-sizing:border-box;border:1px solid #c2c2c8;"></div><svg style="position:absolute;left:661.9px;top:302px;" width="7" height="5" viewBox="0 0 7 5"><path d="M0 0.5h7L3.5 4.5z" fill="#555"/></svg><div style="position:absolute;left:771px;top:296px;width:17px;height:17px;background:linear-gradient(#ffffff,#ececf0);box-sizing:border-box;border:1px solid #c2c2c8;"></div><svg style="position:absolute;left:776.4px;top:302px;" width="7" height="5" viewBox="0 0 7 5"><path d="M0 0.5h7L3.5 4.5z" fill="#555"/></svg><div style="position:absolute;left:865px;top:296px;width:17px;height:17px;background:linear-gradient(#ffffff,#ececf0);box-sizing:border-box;border:1px solid #c2c2c8;"></div><svg style="position:absolute;left:869.9px;top:302px;" width="7" height="5" viewBox="0 0 7 5"><path d="M0 0.5h7L3.5 4.5z" fill="#555"/></svg><div style="position:absolute;left:0;top:0;width:1913px;height:1114px;overflow:hidden;pointer-events:none"><div style="position:absolute;left:41px;top:314px;width:841px;height:25px;background:#d3ebf2;"></div><div style="position:absolute;left:41px;top:364px;width:841px;height:24px;background:#d3ebf2;"></div><div style="position:absolute;left:41px;top:413px;width:841px;height:25px;background:#d3ebf2;"></div><div style="position:absolute;left:41px;top:463px;width:841px;height:25px;background:#d3ebf2;"></div><div style="position:absolute;left:41px;top:512px;width:841px;height:25px;background:#d3ebf2;"></div><div style="position:absolute;left:41px;top:562px;width:841px;height:25px;background:#d3ebf2;"></div><div style="position:absolute;left:41px;top:612px;width:841px;height:24px;background:#d3ebf2;"></div><div style="position:absolute;left:41px;top:661px;width:841px;height:25px;background:#d3ebf2;"></div><div style="position:absolute;left:41px;top:711px;width:841px;height:25px;background:#d3ebf2;"></div><div style="position:absolute;left:41px;top:760px;width:841px;height:25px;background:#d3ebf2;"></div><div style="position:absolute;left:41px;top:810px;width:841px;height:25px;background:#d3ebf2;"></div><div style="position:absolute;left:41px;top:860px;width:841px;height:24px;background:#d3ebf2;"></div><div style="position:absolute;left:41px;top:909px;width:841px;height:25px;background:#d3ebf2;"></div><div style="position:absolute;left:41px;top:959px;width:841px;height:25px;background:#d3ebf2;"></div><div style="position:absolute;left:41px;top:1008px;width:841px;height:25px;background:#d3ebf2;"></div><div style="position:absolute;left:41px;top:1058px;width:841px;height:25px;background:#d3ebf2;"></div><div style="position:absolute;left:41px;top:1108px;width:841px;height:24px;background:#d3ebf2;"></div><div style="position:absolute;left:41.2px;top:314px;width:840.8px;height:1px;background:#b3deea;"></div><div style="position:absolute;left:41.2px;top:339px;width:840.8px;height:1px;background:#b3deea;"></div><div style="position:absolute;left:41.2px;top:364px;width:840.8px;height:1px;background:#b3deea;"></div><div style="position:absolute;left:41.2px;top:388px;width:840.8px;height:1px;background:#b3deea;"></div><div style="position:absolute;left:41.2px;top:413px;width:840.8px;height:1px;background:#b3deea;"></div><div style="position:absolute;left:41.2px;top:438px;width:840.8px;height:1px;background:#b3deea;"></div><div style="position:absolute;left:41.2px;top:463px;width:840.8px;height:1px;background:#b3deea;"></div><div style="position:absolute;left:41.2px;top:488px;width:840.8px;height:1px;background:#b3deea;"></div><div style="position:absolute;left:41.2px;top:512px;width:840.8px;height:1px;background:#b3deea;"></div><div style="position:absolute;left:41.2px;top:537px;width:840.8px;height:1px;background:#b3deea;"></div><div style="position:absolute;left:41.2px;top:562px;width:840.8px;height:1px;background:#b3deea;"></div><div style="position:absolute;left:41.2px;top:587px;width:840.8px;height:1px;background:#b3deea;"></div><div style="position:absolute;left:41.2px;top:612px;width:840.8px;height:1px;background:#b3deea;"></div><div style="position:absolute;left:41.2px;top:636px;width:840.8px;height:1px;background:#b3deea;"></div><div style="position:absolute;left:41.2px;top:661px;width:840.8px;height:1px;background:#b3deea;"></div><div style="position:absolute;left:41.2px;top:686px;width:840.8px;height:1px;background:#b3deea;"></div><div style="position:absolute;left:41.2px;top:711px;width:840.8px;height:1px;background:#b3deea;"></div><div style="position:absolute;left:41.2px;top:736px;width:840.8px;height:1px;background:#b3deea;"></div><div style="position:absolute;left:41.2px;top:760px;width:840.8px;height:1px;background:#b3deea;"></div><div style="position:absolute;left:41.2px;top:785px;width:840.8px;height:1px;background:#b3deea;"></div><div style="position:absolute;left:41.2px;top:810px;width:840.8px;height:1px;background:#b3deea;"></div><div style="position:absolute;left:41.2px;top:835px;width:840.8px;height:1px;background:#b3deea;"></div><div style="position:absolute;left:41.2px;top:860px;width:840.8px;height:1px;background:#b3deea;"></div><div style="position:absolute;left:41.2px;top:884px;width:840.8px;height:1px;background:#b3deea;"></div><div style="position:absolute;left:41.2px;top:909px;width:840.8px;height:1px;background:#b3deea;"></div><div style="position:absolute;left:41.2px;top:934px;width:840.8px;height:1px;background:#b3deea;"></div><div style="position:absolute;left:41.2px;top:959px;width:840.8px;height:1px;background:#b3deea;"></div><div style="position:absolute;left:41.2px;top:984px;width:840.8px;height:1px;background:#b3deea;"></div><div style="position:absolute;left:41.2px;top:1008px;width:840.8px;height:1px;background:#b3deea;"></div><div style="position:absolute;left:41.2px;top:1033px;width:840.8px;height:1px;background:#b3deea;"></div><div style="position:absolute;left:41.2px;top:1058px;width:840.8px;height:1px;background:#b3deea;"></div><div style="position:absolute;left:41.2px;top:1083px;width:840.8px;height:1px;background:#b3deea;"></div><div style="position:absolute;left:41.2px;top:1108px;width:840.8px;height:1px;background:#b3deea;"></div><div style="position:absolute;left:41px;top:314px;width:1px;height:800px;background:#b3deea;"></div><div style="position:absolute;left:220px;top:314px;width:1px;height:800px;background:#b3deea;"></div><div style="position:absolute;left:334px;top:314px;width:1px;height:800px;background:#b3deea;"></div><div style="position:absolute;left:445px;top:314px;width:1px;height:800px;background:#b3deea;"></div><div style="position:absolute;left:561px;top:314px;width:1px;height:800px;background:#b3deea;"></div><div style="position:absolute;left:673px;top:314px;width:1px;height:800px;background:#b3deea;"></div><div style="position:absolute;left:788px;top:314px;width:1px;height:800px;background:#b3deea;"></div><div style="position:absolute;left:881px;top:314px;width:1px;height:800px;background:#b3deea;"></div></div><div style="position:absolute;left:25px;top:205px;width:17px;height:43.5px;background:transparent;box-sizing:border-box;border:2px solid #217346;"></div><div style="position:absolute;left:39px;top:245px;width:4.5px;height:4.5px;background:#217346;box-shadow:0 0 0 1px #fff;"></div><div style="position:absolute;left:0px;top:1114px;width:1913px;height:23px;background:#e6e6e6;"></div><div style="position:absolute;left:0px;top:1114px;width:1899px;height:1px;background:#ababab;"></div><svg style="position:absolute;left:19px;top:1120px;" width="6" height="10" viewBox="0 0 6 10"><path d="M5 0.5 L0.5 5 L5 9.5Z" fill="#c2c2c2"/></svg><svg style="position:absolute;left:42px;top:1120px;" width="6" height="10" viewBox="0 0 6 10"><path d="M0.5 0.5 L5 5 L0.5 9.5Z" fill="#c2c2c2"/></svg><div style="position:absolute;left:80.5px;top:1116px;width:1.2px;height:19px;background:#c6c6c6;"></div><div style="position:absolute;left:83.1px;top:1116.2px;width:212.7px;height:18.6px;background:#1b5064;"></div><div style="position:absolute;left:297.3px;top:1116px;width:1.2px;height:19px;background:#c6c6c6;"></div><div style="position:absolute;left:299.9px;top:1116.2px;width:60.2px;height:18.6px;background:#23788e;"></div><div style="position:absolute;left:361.6px;top:1116px;width:1.2px;height:19px;background:#c6c6c6;"></div><div style="position:absolute;left:363.6px;top:1116.2px;width:82.4px;height:18.6px;background:#2e9ec1;"></div><div style="position:absolute;left:447.8px;top:1116px;width:1.2px;height:19px;background:#c6c6c6;"></div><div style="position:absolute;left:450.3px;top:1116.2px;width:111.1px;height:18.6px;background:#79c9de;"></div><div style="position:absolute;left:563.2px;top:1114.2px;width:111.3px;height:20.6px;background:linear-gradient(#ffffff,#f4f8f5);"></div><div style="position:absolute;left:563.2px;top:1133.4px;width:111.3px;height:1.8px;background:#217346;"></div><svg style="position:absolute;left:701px;top:1117px;" width="17" height="17" viewBox="0 0 17 17"><circle cx="8.5" cy="8.5" r="7.5" stroke="#777" stroke-width="1.1" fill="none"/><path d="M8.5 4.5 V12.5 M4.5 8.5 H12.5" stroke="#777" stroke-width="1.3"/></svg><svg style="position:absolute;left:1147.5px;top:1120px;" width="4" height="12" viewBox="0 0 4 12"><rect x="0.5" y="0.5" width="2" height="2" fill="#9a9a9a"/><rect x="0.5" y="4.5" width="2" height="2" fill="#9a9a9a"/><rect x="0.5" y="8.5" width="2" height="2" fill="#9a9a9a"/></svg><div style="position:absolute;left:1162.3px;top:1118.5px;width:736px;height:14.1px;background:#dcdcdc;"></div><div style="position:absolute;left:1162.3px;top:1118.5px;width:15.4px;height:14.1px;background:#ffffff;box-sizing:border-box;border:1px solid #d0d0d0;"></div><svg style="position:absolute;left:1166px;top:1121px;" width="6" height="9" viewBox="0 0 6 9"><path d="M5 0.5 L0.5 4.5 L5 8.5Z" fill="#666"/></svg><div style="position:absolute;left:1177.7px;top:1118.5px;width:676px;height:14.1px;background:#ffffff;box-sizing:border-box;border:1px solid #c0c0c0;"></div><div style="position:absolute;left:1883.3px;top:1118.5px;width:15px;height:14.1px;background:#ffffff;box-sizing:border-box;border:1px solid #d0d0d0;"></div><svg style="position:absolute;left:1889px;top:1121px;" width="6" height="9" viewBox="0 0 6 9"><path d="M0.5 0.5 L5 4.5 L0.5 8.5Z" fill="#666"/></svg><div style="position:absolute;left:0px;top:1137px;width:1913px;height:1px;background:#d0d0d0;"></div><div style="position:absolute;left:0px;top:1138px;width:1913px;height:20px;background:#f0f0f0;"></div><div style="position:absolute;left:0px;top:1157.6px;width:1913px;height:1.4px;background:#1a1a1a;"></div><div style="position:absolute;left:1648.3px;top:1138px;width:32.7px;height:19.5px;background:#cfcfcf;"></div><svg style="position:absolute;left:1659px;top:1142px;" width="11" height="11" viewBox="0 0 11 11"><rect x="0.5" y="0.5" width="10" height="10" fill="none" stroke="#555"/><path d="M3.83 0.5v10 M7.17 0.5v10 M0.5 3.83h10 M0.5 7.17h10" stroke="#555"/></svg><svg style="position:absolute;left:1691px;top:1142px;" width="13" height="11" viewBox="0 0 13 11"><rect x="0.5" y="0.5" width="11.5" height="10" fill="none" stroke="#777"/><rect x="3" y="2.5" width="6.5" height="6" fill="none" stroke="#777"/><path d="M4.5 4.5h3.5 M4.5 6.5h3.5" stroke="#777"/></svg><svg style="position:absolute;left:1723.5px;top:1142px;" width="13" height="11" viewBox="0 0 13 11"><rect x="0.5" y="0.5" width="11.5" height="10" fill="none" stroke="#777"/><path d="M0.5 5.5 H6.5 V0.5 M3.5 0.5V5.5" stroke="#777" fill="none"/></svg><div style="position:absolute;left:1750.5px;top:1146.8px;width:7.5px;height:1.4px;background:#666;"></div><div style="position:absolute;left:1761px;top:1147.3px;width:100px;height:1px;background:#c6c6c6;"></div><div style="position:absolute;left:1810px;top:1142px;width:2.8px;height:11.5px;background:#666;"></div><svg style="position:absolute;left:1864px;top:1142px;" width="11" height="11" viewBox="0 0 11 11"><path d="M5.3 0.5 V10.5 M0.5 5.5 H10.2" stroke="#555" stroke-width="1.4"/></svg>
<div style="position:absolute;left:865.00px;top:9.09px;white-space:pre;line-height:1;font-family:'Liberation Sans',sans-serif;font-size:12.3px;color:#ffffff;font-weight:400;transform:scaleX(0.9422);transform-origin:0 0;">Sales invoice tracker1 - Excel (Trial)</div><div style="position:absolute;left:18.00px;top:37.79px;white-space:pre;line-height:1;font-family:'Liberation Sans',sans-serif;font-size:12.3px;color:#ffffff;font-weight:400;transform:scaleX(0.9280);transform-origin:0 0;">File</div><div style="position:absolute;left:70.30px;top:37.79px;white-space:pre;line-height:1;font-family:'Liberation Sans',sans-serif;font-size:12.3px;color:#2a7a4e;font-weight:400;transform:scaleX(0.9935);transform-origin:0 0;">Home</div><div style="position:absolute;left:126.20px;top:37.79px;white-space:pre;line-height:1;font-family:'Liberation Sans',sans-serif;font-size:12.3px;color:#ffffff;font-weight:400;transform:scaleX(0.9296);transform-origin:0 0;">Insert</div><div style="position:absolute;left:178.20px;top:37.79px;white-space:pre;line-height:1;font-family:'Liberation Sans',sans-serif;font-size:12.3px;color:#ffffff;font-weight:400;transform:scaleX(0.9267);transform-origin:0 0;">Page Layout</div><div style="position:absolute;left:265.50px;top:37.79px;white-space:pre;line-height:1;font-family:'Liberation Sans',sans-serif;font-size:12.3px;color:#ffffff;font-weight:400;transform:scaleX(0.9405);transform-origin:0 0;">Formulas</div><div style="position:absolute;left:336.80px;top:37.79px;white-space:pre;line-height:1;font-family:'Liberation Sans',sans-serif;font-size:12.3px;color:#ffffff;font-weight:400;transform:scaleX(0.9737);transform-origin:0 0;">Data</div><div style="position:absolute;left:385.70px;top:37.79px;white-space:pre;line-height:1;font-family:'Liberation Sans',sans-serif;font-size:12.3px;color:#ffffff;font-weight:400;transform:scaleX(0.9324);transform-origin:0 0;">Review</div><div style="position:absolute;left:446.20px;top:37.79px;white-space:pre;line-height:1;font-family:'Liberation Sans',sans-serif;font-size:12.3px;color:#ffffff;font-weight:400;transform:scaleX(0.9683);transform-origin:0 0;">View</div><div style="position:absolute;left:512.30px;top:37.79px;white-space:pre;line-height:1;font-family:'Liberation Sans',sans-serif;font-size:12.3px;color:#ffffff;font-weight:400;transform:scaleX(0.9753);transform-origin:0 0;">Tell me what you want to do...</div><div style="position:absolute;left:1758.40px;top:37.59px;white-space:pre;line-height:1;font-family:'Liberation Sans',sans-serif;font-size:12.3px;color:#ffffff;font-weight:400;transform:scaleX(0.9499);transform-origin:0 0;">Mark Hachman</div><div style="position:absolute;left:1870.00px;top:37.46px;white-space:pre;line-height:1;font-family:'Liberation Sans',sans-serif;font-size:12.8px;color:#ffffff;font-weight:400;transform:scaleX(0.8608);transform-origin:0 0;">Share</div><div style="position:absolute;left:8.00px;top:95.89px;white-space:pre;line-height:1;font-family:'Liberation Sans',sans-serif;font-size:12.3px;color:#4a4a4a;font-weight:400;transform:scaleX(0.8425);transform-origin:0 0;">Paste</div><div style="position:absolute;left:62.40px;top:63.69px;white-space:pre;line-height:1;font-family:'Liberation Sans',sans-serif;font-size:12.3px;color:#4a4a4a;font-weight:400;transform:scaleX(0.9038);transform-origin:0 0;">Cut</div><div style="position:absolute;left:62.40px;top:85.89px;white-space:pre;line-height:1;font-family:'Liberation Sans',sans-serif;font-size:12.3px;color:#4a4a4a;font-weight:400;transform:scaleX(0.9332);transform-origin:0 0;">Copy</div><div style="position:absolute;left:62.60px;top:107.89px;white-space:pre;line-height:1;font-family:'Liberation Sans',sans-serif;font-size:12.3px;color:#4a4a4a;font-weight:400;transform:scaleX(0.9394);transform-origin:0 0;">Format Painter</div><div style="position:absolute;left:42.70px;top:130.27px;white-space:pre;line-height:1;font-family:'Liberation Sans',sans-serif;font-size:11.5px;color:#636363;font-weight:400;transform:scaleX(0.9302);transform-origin:0 0;">Clipboard</div><div style="position:absolute;left:154.50px;top:71.39px;white-space:pre;line-height:1;font-family:'Liberation Sans',sans-serif;font-size:12.3px;color:#4a4a4a;font-weight:400;transform:scaleX(0.9610);transform-origin:0 0;">Calibri</div><div style="position:absolute;left:245.50px;top:71.39px;white-space:pre;line-height:1;font-family:'Liberation Sans',sans-serif;font-size:12.3px;color:#4a4a4a;font-weight:400;transform:scaleX(0.8986);transform-origin:0 0;">10</div><div style="position:absolute;left:156.50px;top:100.13px;white-space:pre;line-height:1;font-family:'Liberation Sans',sans-serif;font-size:13.2px;color:#444;font-weight:700;transform:scaleX(0.8393);transform-origin:0 0;">B</div><div style="position:absolute;left:179.50px;top:100.13px;white-space:pre;line-height:1;font-family:'Liberation Serif',sans-serif;font-size:13.2px;color:#444;font-weight:700;font-style:italic;transform:scaleX(1.2644);transform-origin:0 0;">I</div><div style="position:absolute;left:199.00px;top:100.13px;white-space:pre;line-height:1;font-family:'Liberation Sans',sans-serif;font-size:13.2px;color:#444;font-weight:400;transform:scaleX(0.9443);transform-origin:0 0;">U</div><div style="position:absolute;left:224.70px;top:130.27px;white-space:pre;line-height:1;font-family:'Liberation Sans',sans-serif;font-size:11.5px;color:#636363;font-weight:400;transform:scaleX(0.8603);transform-origin:0 0;">Font</div><div style="position:absolute;left:479.50px;top:71.39px;white-space:pre;line-height:1;font-family:'Liberation Sans',sans-serif;font-size:12.3px;color:#4a4a4a;font-weight:400;transform:scaleX(0.9653);transform-origin:0 0;">Wrap Text</div><div style="position:absolute;left:479.50px;top:100.79px;white-space:pre;line-height:1;font-family:'Liberation Sans',sans-serif;font-size:12.3px;color:#4a4a4a;font-weight:400;transform:scaleX(0.9711);transform-origin:0 0;">Merge &amp; Center</div><div style="position:absolute;left:430.00px;top:130.27px;white-space:pre;line-height:1;font-family:'Liberation Sans',sans-serif;font-size:11.5px;color:#636363;font-weight:400;transform:scaleX(0.8995);transform-origin:0 0;">Alignment</div><div style="position:absolute;left:591.00px;top:71.39px;white-space:pre;line-height:1;font-family:'Liberation Sans',sans-serif;font-size:12.3px;color:#4a4a4a;font-weight:400;transform:scaleX(0.9029);transform-origin:0 0;">General</div><div style="position:absolute;left:593.50px;top:99.45px;white-space:pre;line-height:1;font-family:'Liberation Sans',sans-serif;font-size:14px;color:#555;font-weight:400;transform:scaleX(1.0902);transform-origin:0 0;">$</div><div style="position:absolute;left:622.50px;top:99.30px;white-space:pre;line-height:1;font-family:'Liberation Sans',sans-serif;font-size:15px;color:#555;font-weight:400;transform:scaleX(0.9368);transform-origin:0 0;">%</div><div style="position:absolute;left:621.60px;top:130.27px;white-space:pre;line-height:1;font-family:'Liberation Sans',sans-serif;font-size:11.5px;color:#636363;font-weight:400;transform:scaleX(0.9290);transform-origin:0 0;">Number</div><div style="position:absolute;left:720.90px;top:95.59px;white-space:pre;line-height:1;font-family:'Liberation Sans',sans-serif;font-size:12.3px;color:#4a4a4a;font-weight:400;transform:scaleX(0.9930);transform-origin:0 0;">Conditional</div><div style="position:absolute;left:718.60px;top:112.29px;white-space:pre;line-height:1;font-family:'Liberation Sans',sans-serif;font-size:12.3px;color:#4a4a4a;font-weight:400;transform:scaleX(0.9799);transform-origin:0 0;">Formatting</div><div style="position:absolute;left:789.00px;top:95.59px;white-space:pre;line-height:1;font-family:'Liberation Sans',sans-serif;font-size:12.3px;color:#4a4a4a;font-weight:400;transform:scaleX(0.9285);transform-origin:0 0;">Format as</div><div style="position:absolute;left:796.60px;top:112.29px;white-space:pre;line-height:1;font-family:'Liberation Sans',sans-serif;font-size:12.3px;color:#4a4a4a;font-weight:400;transform:scaleX(0.9862);transform-origin:0 0;">Table</div><div style="position:absolute;left:852.00px;top:71.39px;white-space:pre;line-height:1;font-family:'Liberation Sans',sans-serif;font-size:12.3px;color:#2a7fa5;font-weight:400;transform:scaleX(1.0166);transform-origin:0 0;">Normal</div><div style="position:absolute;left:956.60px;top:71.39px;white-space:pre;line-height:1;font-family:'Liberation Sans',sans-serif;font-size:12.3px;color:#9c0006;font-weight:400;transform:scaleX(0.9776);transform-origin:0 0;">Bad</div><div style="position:absolute;left:1061.50px;top:71.39px;white-space:pre;line-height:1;font-family:'Liberation Sans',sans-serif;font-size:12.3px;color:#006100;font-weight:400;transform:scaleX(0.8972);transform-origin:0 0;">Good</div><div style="position:absolute;left:1166.00px;top:71.39px;white-space:pre;line-height:1;font-family:'Liberation Sans',sans-serif;font-size:12.3px;color:#9c5700;font-weight:400;transform:scaleX(1.0843);transform-origin:0 0;">Neutral</div><div style="position:absolute;left:1271.00px;top:71.39px;white-space:pre;line-height:1;font-family:'Liberation Sans',sans-serif;font-size:12.3px;color:#fa7d00;font-weight:700;">Calculation</div><div style="position:absolute;left:851.50px;top:97.49px;white-space:pre;line-height:1;font-family:'Liberation Sans',sans-serif;font-size:12.3px;color:#ffffff;font-weight:700;transform:scaleX(0.9715);transform-origin:0 0;">Check Cell</div><div style="position:absolute;left:956.60px;top:97.49px;white-space:pre;line-height:1;font-family:'Liberation Sans',sans-serif;font-size:12.3px;color:#7f7f7f;font-weight:400;font-style:italic;transform:scaleX(1.0588);transform-origin:0 0;">Explanatory T...</div><div style="position:absolute;left:1061.50px;top:97.49px;white-space:pre;line-height:1;font-family:'Liberation Sans',sans-serif;font-size:12.3px;color:#3b8db1;font-weight:400;">Followed Hyp...</div><div style="position:absolute;left:1166.30px;top:97.49px;white-space:pre;line-height:1;font-family:'Liberation Sans',sans-serif;font-size:12.3px;color:#3b8db1;font-weight:400;transform:scaleX(1.0338);transform-origin:0 0;">Hyperlink</div><div style="position:absolute;left:1271.00px;top:97.49px;white-space:pre;line-height:1;font-family:'Liberation Sans',sans-serif;font-size:12.3px;color:#3f3f76;font-weight:400;transform:scaleX(1.0782);transform-origin:0 0;">Input</div><div style="position:absolute;left:1038.60px;top:130.27px;white-space:pre;line-height:1;font-family:'Liberation Sans',sans-serif;font-size:11.5px;color:#636363;font-weight:400;transform:scaleX(0.8331);transform-origin:0 0;">Styles</div><div style="position:absolute;left:1399.80px;top:95.89px;white-space:pre;line-height:1;font-family:'Liberation Sans',sans-serif;font-size:12.3px;color:#4a4a4a;font-weight:400;transform:scaleX(0.9134);transform-origin:0 0;">Insert</div><div style="position:absolute;left:1436.80px;top:95.89px;white-space:pre;line-height:1;font-family:'Liberation Sans',sans-serif;font-size:12.3px;color:#4a4a4a;font-weight:400;transform:scaleX(0.9705);transform-origin:0 0;">Delete</div><div style="position:absolute;left:1475.60px;top:95.89px;white-space:pre;line-height:1;font-family:'Liberation Sans',sans-serif;font-size:12.3px;color:#4a4a4a;font-weight:400;transform:scaleX(0.9601);transform-origin:0 0;">Format</div><div style="position:absolute;left:1443.70px;top:130.27px;white-space:pre;line-height:1;font-family:'Liberation Sans',sans-serif;font-size:11.5px;color:#636363;font-weight:400;transform:scaleX(0.8215);transform-origin:0 0;">Cells</div><div style="position:absolute;left:1543.70px;top:62.39px;white-space:pre;line-height:1;font-family:'Liberation Sans',sans-serif;font-size:12.3px;color:#4a4a4a;font-weight:400;transform:scaleX(0.9507);transform-origin:0 0;">AutoSum</div><div style="position:absolute;left:1543.70px;top:83.99px;white-space:pre;line-height:1;font-family:'Liberation Sans',sans-serif;font-size:12.3px;color:#4a4a4a;font-weight:400;transform:scaleX(0.9416);transform-origin:0 0;">Fill</div><div style="position:absolute;left:1543.70px;top:105.29px;white-space:pre;line-height:1;font-family:'Liberation Sans',sans-serif;font-size:12.3px;color:#4a4a4a;font-weight:400;transform:scaleX(0.9289);transform-origin:0 0;">Clear</div><div style="position:absolute;left:1611.60px;top:96.19px;white-space:pre;line-height:1;font-family:'Liberation Sans',sans-serif;font-size:12.3px;color:#4a4a4a;font-weight:400;transform:scaleX(0.9920);transform-origin:0 0;">Sort &amp;</div><div style="position:absolute;left:1611.60px;top:112.29px;white-space:pre;line-height:1;font-family:'Liberation Sans',sans-serif;font-size:12.3px;color:#4a4a4a;font-weight:400;transform:scaleX(0.9697);transform-origin:0 0;">Filter</div><div style="position:absolute;left:1653.00px;top:96.19px;white-space:pre;line-height:1;font-family:'Liberation Sans',sans-serif;font-size:12.3px;color:#4a4a4a;font-weight:400;transform:scaleX(0.9846);transform-origin:0 0;">Find &amp;</div><div style="position:absolute;left:1650.80px;top:112.29px;white-space:pre;line-height:1;font-family:'Liberation Sans',sans-serif;font-size:12.3px;color:#4a4a4a;font-weight:400;transform:scaleX(0.9272);transform-origin:0 0;">Select</div><div style="position:absolute;left:1591.50px;top:130.27px;white-space:pre;line-height:1;font-family:'Liberation Sans',sans-serif;font-size:11.5px;color:#636363;font-weight:400;transform:scaleX(0.8956);transform-origin:0 0;">Editing</div><div style="position:absolute;left:9.00px;top:161.09px;white-space:pre;line-height:1;font-family:'Liberation Sans',sans-serif;font-size:12.3px;color:#333;font-weight:400;transform:scaleX(0.9304);transform-origin:0 0;">A1</div><div style="position:absolute;left:217.00px;top:160.65px;white-space:pre;line-height:1;font-family:'Liberation Serif',sans-serif;font-size:14px;color:#555;font-weight:400;font-style:italic;transform:scaleX(1.2859);transform-origin:0 0;">fx</div><div style="position:absolute;left:29.75px;top:191.59px;white-space:pre;line-height:1;font-family:'Liberation Sans',sans-serif;font-size:12.3px;color:#217346;font-weight:400;">A</div><div style="position:absolute;left:127.40px;top:191.59px;white-space:pre;line-height:1;font-family:'Liberation Sans',sans-serif;font-size:12.3px;color:#262626;font-weight:400;">B</div><div style="position:absolute;left:273.45px;top:191.59px;white-space:pre;line-height:1;font-family:'Liberation Sans',sans-serif;font-size:12.3px;color:#262626;font-weight:400;">C</div><div style="position:absolute;left:386.15px;top:191.59px;white-space:pre;line-height:1;font-family:'Liberation Sans',sans-serif;font-size:12.3px;color:#262626;font-weight:400;">D</div><div style="position:absolute;left:500.15px;top:191.59px;white-space:pre;line-height:1;font-family:'Liberation Sans',sans-serif;font-size:12.3px;color:#262626;font-weight:400;">E</div><div style="position:absolute;left:614.59px;top:191.59px;white-space:pre;line-height:1;font-family:'Liberation Sans',sans-serif;font-size:12.3px;color:#262626;font-weight:400;">F</div><div style="position:absolute;left:726.96px;top:191.59px;white-space:pre;line-height:1;font-family:'Liberation Sans',sans-serif;font-size:12.3px;color:#262626;font-weight:400;">G</div><div style="position:absolute;left:831.30px;top:191.59px;white-space:pre;line-height:1;font-family:'Liberation Sans',sans-serif;font-size:12.3px;color:#262626;font-weight:400;">H</div><div style="position:absolute;left:888.59px;top:191.59px;white-space:pre;line-height:1;font-family:'Liberation Sans',sans-serif;font-size:12.3px;color:#262626;font-weight:400;">I</div><div style="position:absolute;left:927.52px;top:191.59px;white-space:pre;line-height:1;font-family:'Liberation Sans',sans-serif;font-size:12.3px;color:#262626;font-weight:400;">J</div><div style="position:absolute;left:991.80px;top:191.59px;white-space:pre;line-height:1;font-family:'Liberation Sans',sans-serif;font-size:12.3px;color:#262626;font-weight:400;">K</div><div style="position:absolute;left:1058.08px;top:191.59px;white-space:pre;line-height:1;font-family:'Liberation Sans',sans-serif;font-size:12.3px;color:#262626;font-weight:400;">L</div><div style="position:absolute;left:1121.97px;top:191.59px;white-space:pre;line-height:1;font-family:'Liberation Sans',sans-serif;font-size:12.3px;color:#262626;font-weight:400;">M</div><div style="position:absolute;left:1188.25px;top:191.59px;white-space:pre;line-height:1;font-family:'Liberation Sans',sans-serif;font-size:12.3px;color:#262626;font-weight:400;">N</div><div style="position:absolute;left:1253.51px;top:191.59px;white-space:pre;line-height:1;font-family:'Liberation Sans',sans-serif;font-size:12.3px;color:#262626;font-weight:400;">O</div><div style="position:absolute;left:1319.80px;top:191.59px;white-space:pre;line-height:1;font-family:'Liberation Sans',sans-serif;font-size:12.3px;color:#262626;font-weight:400;">P</div><div style="position:absolute;left:1384.71px;top:191.59px;white-space:pre;line-height:1;font-family:'Liberation Sans',sans-serif;font-size:12.3px;color:#262626;font-weight:400;">Q</div><div style="position:absolute;left:1450.65px;top:191.59px;white-space:pre;line-height:1;font-family:'Liberation Sans',sans-serif;font-size:12.3px;color:#262626;font-weight:400;">R</div><div style="position:absolute;left:1516.60px;top:191.59px;white-space:pre;line-height:1;font-family:'Liberation Sans',sans-serif;font-size:12.3px;color:#262626;font-weight:400;">S</div><div style="position:absolute;left:1582.54px;top:191.59px;white-space:pre;line-height:1;font-family:'Liberation Sans',sans-serif;font-size:12.3px;color:#262626;font-weight:400;">T</div><div style="position:absolute;left:1647.45px;top:191.59px;white-space:pre;line-height:1;font-family:'Liberation Sans',sans-serif;font-size:12.3px;color:#262626;font-weight:400;">U</div><div style="position:absolute;left:1713.40px;top:191.59px;white-space:pre;line-height:1;font-family:'Liberation Sans',sans-serif;font-size:12.3px;color:#262626;font-weight:400;">V</div><div style="position:absolute;left:1777.30px;top:191.59px;white-space:pre;line-height:1;font-family:'Liberation Sans',sans-serif;font-size:12.3px;color:#262626;font-weight:400;">W</div><div style="position:absolute;left:1844.60px;top:191.59px;white-space:pre;line-height:1;font-family:'Liberation Sans',sans-serif;font-size:12.3px;color:#262626;font-weight:400;">X</div><div style="position:absolute;left:9.08px;top:232.79px;white-space:pre;line-height:1;font-family:'Liberation Sans',sans-serif;font-size:12.3px;color:#217346;font-weight:400;">1</div><div style="position:absolute;left:9.08px;top:270.49px;white-space:pre;line-height:1;font-family:'Liberation Sans',sans-serif;font-size:12.3px;color:#262626;font-weight:400;">2</div><div style="position:absolute;left:9.08px;top:299.19px;white-space:pre;line-height:1;font-family:'Liberation Sans',sans-serif;font-size:12.3px;color:#262626;font-weight:400;">3</div><div style="position:absolute;left:9.08px;top:323.99px;white-space:pre;line-height:1;font-family:'Liberation Sans',sans-serif;font-size:12.3px;color:#262626;font-weight:400;">4</div><div style="position:absolute;left:9.08px;top:348.79px;white-space:pre;line-height:1;font-family:'Liberation Sans',sans-serif;font-size:12.3px;color:#262626;font-weight:400;">5</div><div style="position:absolute;left:9.08px;top:373.59px;white-space:pre;line-height:1;font-family:'Liberation Sans',sans-serif;font-size:12.3px;color:#262626;font-weight:400;">6</div><div style="position:absolute;left:9.08px;top:398.39px;white-space:pre;line-height:1;font-family:'Liberation Sans',sans-serif;font-size:12.3px;color:#262626;font-weight:400;">7</div><div style="position:absolute;left:9.08px;top:423.19px;white-space:pre;line-height:1;font-family:'Liberation Sans',sans-serif;font-size:12.3px;color:#262626;font-weight:400;">8</div><div style="position:absolute;left:9.08px;top:447.99px;white-space:pre;line-height:1;font-family:'Liberation Sans',sans-serif;font-size:12.3px;color:#262626;font-weight:400;">9</div><div style="position:absolute;left:5.66px;top:472.79px;white-space:pre;line-height:1;font-family:'Liberation Sans',sans-serif;font-size:12.3px;color:#262626;font-weight:400;">10</div><div style="position:absolute;left:6.12px;top:497.59px;white-space:pre;line-height:1;font-family:'Liberation Sans',sans-serif;font-size:12.3px;color:#262626;font-weight:400;">11</div><div style="position:absolute;left:5.66px;top:522.39px;white-space:pre;line-height:1;font-family:'Liberation Sans',sans-serif;font-size:12.3px;color:#262626;font-weight:400;">12</div><div style="position:absolute;left:5.66px;top:547.19px;white-space:pre;line-height:1;font-family:'Liberation Sans',sans-serif;font-size:12.3px;color:#262626;font-weight:400;">13</div><div style="position:absolute;left:5.66px;top:571.99px;white-space:pre;line-height:1;font-family:'Liberation Sans',sans-serif;font-size:12.3px;color:#262626;font-weight:400;">14</div><div style="position:absolute;left:5.66px;top:596.79px;white-space:pre;line-height:1;font-family:'Liberation Sans',sans-serif;font-size:12.3px;color:#262626;font-weight:400;">15</div><div style="position:absolute;left:5.66px;top:621.59px;white-space:pre;line-height:1;font-family:'Liberation Sans',sans-serif;font-size:12.3px;color:#262626;font-weight:400;">16</div><div style="position:absolute;left:5.66px;top:646.39px;white-space:pre;line-height:1;font-family:'Liberation Sans',sans-serif;font-size:12.3px;color:#262626;font-weight:400;">17</div><div style="position:absolute;left:5.66px;top:671.19px;white-space:pre;line-height:1;font-family:'Liberation Sans',sans-serif;font-size:12.3px;color:#262626;font-weight:400;">18</div><div style="position:absolute;left:5.66px;top:695.99px;white-space:pre;line-height:1;font-family:'Liberation Sans',sans-serif;font-size:12.3px;color:#262626;font-weight:400;">19</div><div style="position:absolute;left:5.66px;top:720.79px;white-space:pre;line-height:1;font-family:'Liberation Sans',sans-serif;font-size:12.3px;color:#262626;font-weight:400;">20</div><div style="position:absolute;left:5.66px;top:745.59px;white-space:pre;line-height:1;font-family:'Liberation Sans',sans-serif;font-size:12.3px;color:#262626;font-weight:400;">21</div><div style="position:absolute;left:5.66px;top:770.39px;white-space:pre;line-height:1;font-family:'Liberation Sans',sans-serif;font-size:12.3px;color:#262626;font-weight:400;">22</div><div style="position:absolute;left:5.66px;top:795.19px;white-space:pre;line-height:1;font-family:'Liberation Sans',sans-serif;font-size:12.3px;color:#262626;font-weight:400;">23</div><div style="position:absolute;left:5.66px;top:819.99px;white-space:pre;line-height:1;font-family:'Liberation Sans',sans-serif;font-size:12.3px;color:#262626;font-weight:400;">24</div><div style="position:absolute;left:5.66px;top:844.79px;white-space:pre;line-height:1;font-family:'Liberation Sans',sans-serif;font-size:12.3px;color:#262626;font-weight:400;">25</div><div style="position:absolute;left:5.66px;top:869.59px;white-space:pre;line-height:1;font-family:'Liberation Sans',sans-serif;font-size:12.3px;color:#262626;font-weight:400;">26</div><div style="position:absolute;left:5.66px;top:894.39px;white-space:pre;line-height:1;font-family:'Liberation Sans',sans-serif;font-size:12.3px;color:#262626;font-weight:400;">27</div><div style="position:absolute;left:5.66px;top:919.19px;white-space:pre;line-height:1;font-family:'Liberation Sans',sans-serif;font-size:12.3px;color:#262626;font-weight:400;">28</div><div style="position:absolute;left:5.66px;top:943.99px;white-space:pre;line-height:1;font-family:'Liberation Sans',sans-serif;font-size:12.3px;color:#262626;font-weight:400;">29</div><div style="position:absolute;left:5.66px;top:968.79px;white-space:pre;line-height:1;font-family:'Liberation Sans',sans-serif;font-size:12.3px;color:#262626;font-weight:400;">30</div><div style="position:absolute;left:5.66px;top:993.59px;white-space:pre;line-height:1;font-family:'Liberation Sans',sans-serif;font-size:12.3px;color:#262626;font-weight:400;">31</div><div style="position:absolute;left:5.66px;top:1018.39px;white-space:pre;line-height:1;font-family:'Liberation Sans',sans-serif;font-size:12.3px;color:#262626;font-weight:400;">32</div><div style="position:absolute;left:5.66px;top:1043.19px;white-space:pre;line-height:1;font-family:'Liberation Sans',sans-serif;font-size:12.3px;color:#262626;font-weight:400;">33</div><div style="position:absolute;left:5.66px;top:1067.99px;white-space:pre;line-height:1;font-family:'Liberation Sans',sans-serif;font-size:12.3px;color:#262626;font-weight:400;">34</div><div style="position:absolute;left:5.66px;top:1092.79px;white-space:pre;line-height:1;font-family:'Liberation Sans',sans-serif;font-size:12.3px;color:#262626;font-weight:400;">35</div><div style="position:absolute;left:45.00px;top:258.68px;white-space:pre;line-height:1;font-family:'Liberation Sans',sans-serif;font-size:19.4px;color:#22788e;font-weight:400;">Invoice Details</div><div style="position:absolute;left:44.50px;top:293.90px;white-space:pre;line-height:1;font-family:'Liberation Sans',sans-serif;font-size:12.4px;color:#22687d;font-weight:400;">Description</div><div style="position:absolute;left:223.30px;top:293.90px;white-space:pre;line-height:1;font-family:'Liberation Sans',sans-serif;font-size:12.4px;color:#22687d;font-weight:400;transform:scaleX(0.9800);transform-origin:0 0;">Invoice #</div><div style="position:absolute;left:337.30px;top:293.90px;white-space:pre;line-height:1;font-family:'Liberation Sans',sans-serif;font-size:12.4px;color:#22687d;font-weight:400;transform:scaleX(1.0338);transform-origin:0 0;">Item #</div><div style="position:absolute;left:448.70px;top:293.90px;white-space:pre;line-height:1;font-family:'Liberation Sans',sans-serif;font-size:12.4px;color:#22687d;font-weight:400;transform:scaleX(1.0113);transform-origin:0 0;">Qty</div><div style="position:absolute;left:564.60px;top:293.90px;white-space:pre;line-height:1;font-family:'Liberation Sans',sans-serif;font-size:12.4px;color:#22687d;font-weight:400;">Unit Price</div><div style="position:absolute;left:676.90px;top:293.90px;white-space:pre;line-height:1;font-family:'Liberation Sans',sans-serif;font-size:12.4px;color:#22687d;font-weight:400;">Discount</div><div style="position:absolute;left:791.40px;top:293.90px;white-space:pre;line-height:1;font-family:'Liberation Sans',sans-serif;font-size:12.4px;color:#22687d;font-weight:400;transform:scaleX(1.0699);transform-origin:0 0;">Total</div><div style="position:absolute;left:53.70px;top:324.35px;white-space:pre;line-height:1;font-family:'Liberation Sans',sans-serif;font-size:12.35px;color:#2f86a0;font-weight:400;">Invoice 3-456-1 Data 1</div><div style="position:absolute;left:233.00px;top:324.35px;white-space:pre;line-height:1;font-family:'Liberation Sans',sans-serif;font-size:12.35px;color:#2f86a0;font-weight:400;">3-456-1</div><div style="position:absolute;left:347.50px;top:324.35px;white-space:pre;line-height:1;font-family:'Liberation Sans',sans-serif;font-size:12.35px;color:#2f86a0;font-weight:400;">1</div><div style="position:absolute;left:549.12px;top:318.55px;white-space:pre;line-height:1;font-family:'Liberation Sans',sans-serif;font-size:12.35px;color:#2f86a0;font-weight:400;">1</div><div style="position:absolute;left:640.11px;top:318.55px;white-space:pre;line-height:1;font-family:'Liberation Sans',sans-serif;font-size:12.35px;color:#2f86a0;font-weight:400;">$1.00</div><div style="position:absolute;left:754.61px;top:318.55px;white-space:pre;line-height:1;font-family:'Liberation Sans',sans-serif;font-size:12.35px;color:#2f86a0;font-weight:400;">$1.00</div><div style="position:absolute;left:848.41px;top:318.55px;white-space:pre;line-height:1;font-family:'Liberation Sans',sans-serif;font-size:12.35px;color:#2f86a0;font-weight:400;">$0.00</div><div style="position:absolute;left:53.70px;top:349.15px;white-space:pre;line-height:1;font-family:'Liberation Sans',sans-serif;font-size:12.35px;color:#2f86a0;font-weight:400;">Invoice 3-456-1 Data 2</div><div style="position:absolute;left:233.00px;top:349.15px;white-space:pre;line-height:1;font-family:'Liberation Sans',sans-serif;font-size:12.35px;color:#2f86a0;font-weight:400;">3-456-1</div><div style="position:absolute;left:347.50px;top:349.15px;white-space:pre;line-height:1;font-family:'Liberation Sans',sans-serif;font-size:12.35px;color:#2f86a0;font-weight:400;">2</div><div style="position:absolute;left:549.12px;top:343.35px;white-space:pre;line-height:1;font-family:'Liberation Sans',sans-serif;font-size:12.35px;color:#2f86a0;font-weight:400;">2</div><div style="position:absolute;left:640.11px;top:343.35px;white-space:pre;line-height:1;font-family:'Liberation Sans',sans-serif;font-size:12.35px;color:#2f86a0;font-weight:400;">$2.00</div><div style="position:absolute;left:754.61px;top:343.35px;white-space:pre;line-height:1;font-family:'Liberation Sans',sans-serif;font-size:12.35px;color:#2f86a0;font-weight:400;">$2.00</div><div style="position:absolute;left:848.41px;top:343.35px;white-space:pre;line-height:1;font-family:'Liberation Sans',sans-serif;font-size:12.35px;color:#2f86a0;font-weight:400;">$2.00</div><div style="position:absolute;left:53.70px;top:373.95px;white-space:pre;line-height:1;font-family:'Liberation Sans',sans-serif;font-size:12.35px;color:#2f86a0;font-weight:400;">Invoice 3-456-1 Data 3</div><div style="position:absolute;left:233.00px;top:373.95px;white-space:pre;line-height:1;font-family:'Liberation Sans',sans-serif;font-size:12.35px;color:#2f86a0;font-weight:400;">3-456-1</div><div style="position:absolute;left:347.50px;top:373.95px;white-space:pre;line-height:1;font-family:'Liberation Sans',sans-serif;font-size:12.35px;color:#2f86a0;font-weight:400;">3</div><div style="position:absolute;left:549.12px;top:368.15px;white-space:pre;line-height:1;font-family:'Liberation Sans',sans-serif;font-size:12.35px;color:#2f86a0;font-weight:400;">3</div><div style="position:absolute;left:640.11px;top:368.15px;white-space:pre;line-height:1;font-family:'Liberation Sans',sans-serif;font-size:12.35px;color:#2f86a0;font-weight:400;">$3.00</div><div style="position:absolute;left:754.61px;top:368.15px;white-space:pre;line-height:1;font-family:'Liberation Sans',sans-serif;font-size:12.35px;color:#2f86a0;font-weight:400;">$3.00</div><div style="position:absolute;left:848.41px;top:368.15px;white-space:pre;line-height:1;font-family:'Liberation Sans',sans-serif;font-size:12.35px;color:#2f86a0;font-weight:400;">$6.00</div><div style="position:absolute;left:53.70px;top:398.75px;white-space:pre;line-height:1;font-family:'Liberation Sans',sans-serif;font-size:12.35px;color:#2f86a0;font-weight:400;">Invoice 3-456-1 Data 4</div><div style="position:absolute;left:233.00px;top:398.75px;white-space:pre;line-height:1;font-family:'Liberation Sans',sans-serif;font-size:12.35px;color:#2f86a0;font-weight:400;">3-456-1</div><div style="position:absolute;left:347.50px;top:398.75px;white-space:pre;line-height:1;font-family:'Liberation Sans',sans-serif;font-size:12.35px;color:#2f86a0;font-weight:400;">4</div><div style="position:absolute;left:549.12px;top:392.95px;white-space:pre;line-height:1;font-family:'Liberation Sans',sans-serif;font-size:12.35px;color:#2f86a0;font-weight:400;">4</div><div style="position:absolute;left:640.11px;top:392.95px;white-space:pre;line-height:1;font-family:'Liberation Sans',sans-serif;font-size:12.35px;color:#2f86a0;font-weight:400;">$4.00</div><div style="position:absolute;left:754.61px;top:392.95px;white-space:pre;line-height:1;font-family:'Liberation Sans',sans-serif;font-size:12.35px;color:#2f86a0;font-weight:400;">$4.00</div><div style="position:absolute;left:841.53px;top:392.95px;white-space:pre;line-height:1;font-family:'Liberation Sans',sans-serif;font-size:12.35px;color:#2f86a0;font-weight:400;">$12.00</div><div style="position:absolute;left:53.70px;top:423.55px;white-space:pre;line-height:1;font-family:'Liberation Sans',sans-serif;font-size:12.35px;color:#2f86a0;font-weight:400;">Invoice 3-456-1 Data 5</div><div style="position:absolute;left:233.00px;top:423.55px;white-space:pre;line-height:1;font-family:'Liberation Sans',sans-serif;font-size:12.35px;color:#2f86a0;font-weight:400;">3-456-1</div><div style="position:absolute;left:347.50px;top:423.55px;white-space:pre;line-height:1;font-family:'Liberation Sans',sans-serif;font-size:12.35px;color:#2f86a0;font-weight:400;">5</div><div style="position:absolute;left:549.12px;top:417.75px;white-space:pre;line-height:1;font-family:'Liberation Sans',sans-serif;font-size:12.35px;color:#2f86a0;font-weight:400;">5</div><div style="position:absolute;left:640.11px;top:417.75px;white-space:pre;line-height:1;font-family:'Liberation Sans',sans-serif;font-size:12.35px;color:#2f86a0;font-weight:400;">$5.00</div><div style="position:absolute;left:754.61px;top:417.75px;white-space:pre;line-height:1;font-family:'Liberation Sans',sans-serif;font-size:12.35px;color:#2f86a0;font-weight:400;">$5.00</div><div style="position:absolute;left:841.53px;top:417.75px;white-space:pre;line-height:1;font-family:'Liberation Sans',sans-serif;font-size:12.35px;color:#2f86a0;font-weight:400;">$20.00</div><div style="position:absolute;left:53.70px;top:448.35px;white-space:pre;line-height:1;font-family:'Liberation Sans',sans-serif;font-size:12.35px;color:#2f86a0;font-weight:400;">Invoice 3-456-1 Data 6</div><div style="position:absolute;left:233.00px;top:448.35px;white-space:pre;line-height:1;font-family:'Liberation Sans',sans-serif;font-size:12.35px;color:#2f86a0;font-weight:400;">3-456-1</div><div style="position:absolute;left:347.50px;top:448.35px;white-space:pre;line-height:1;font-family:'Liberation Sans',sans-serif;font-size:12.35px;color:#2f86a0;font-weight:400;">6</div><div style="position:absolute;left:549.12px;top:442.55px;white-space:pre;line-height:1;font-family:'Liberation Sans',sans-serif;font-size:12.35px;color:#2f86a0;font-weight:400;">6</div><div style="position:absolute;left:640.11px;top:442.55px;white-space:pre;line-height:1;font-family:'Liberation Sans',sans-serif;font-size:12.35px;color:#2f86a0;font-weight:400;">$6.00</div><div style="position:absolute;left:754.61px;top:442.55px;white-space:pre;line-height:1;font-family:'Liberation Sans',sans-serif;font-size:12.35px;color:#2f86a0;font-weight:400;">$6.00</div><div style="position:absolute;left:841.53px;top:442.55px;white-space:pre;line-height:1;font-family:'Liberation Sans',sans-serif;font-size:12.35px;color:#2f86a0;font-weight:400;">$30.00</div><div style="position:absolute;left:53.70px;top:473.15px;white-space:pre;line-height:1;font-family:'Liberation Sans',sans-serif;font-size:12.35px;color:#2f86a0;font-weight:400;">Invoice 3-456-1 Data 7</div><div style="position:absolute;left:233.00px;top:473.15px;white-space:pre;line-height:1;font-family:'Liberation Sans',sans-serif;font-size:12.35px;color:#2f86a0;font-weight:400;">3-456-1</div><div style="position:absolute;left:347.50px;top:473.15px;white-space:pre;line-height:1;font-family:'Liberation Sans',sans-serif;font-size:12.35px;color:#2f86a0;font-weight:400;">7</div><div style="position:absolute;left:549.12px;top:467.35px;white-space:pre;line-height:1;font-family:'Liberation Sans',sans-serif;font-size:12.35px;color:#2f86a0;font-weight:400;">7</div><div style="position:absolute;left:640.11px;top:467.35px;white-space:pre;line-height:1;font-family:'Liberation Sans',sans-serif;font-size:12.35px;color:#2f86a0;font-weight:400;">$7.00</div><div style="position:absolute;left:754.61px;top:467.35px;white-space:pre;line-height:1;font-family:'Liberation Sans',sans-serif;font-size:12.35px;color:#2f86a0;font-weight:400;">$7.00</div><div style="position:absolute;left:841.53px;top:467.35px;white-space:pre;line-height:1;font-family:'Liberation Sans',sans-serif;font-size:12.35px;color:#2f86a0;font-weight:400;">$42.00</div><div style="position:absolute;left:53.70px;top:497.95px;white-space:pre;line-height:1;font-family:'Liberation Sans',sans-serif;font-size:12.35px;color:#2f86a0;font-weight:400;">Invoice 3-456-1 Data 8</div><div style="position:absolute;left:233.00px;top:497.95px;white-space:pre;line-height:1;font-family:'Liberation Sans',sans-serif;font-size:12.35px;color:#2f86a0;font-weight:400;">3-456-1</div><div style="position:absolute;left:347.50px;top:497.95px;white-space:pre;line-height:1;font-family:'Liberation Sans',sans-serif;font-size:12.35px;color:#2f86a0;font-weight:400;">8</div><div style="position:absolute;left:549.12px;top:492.15px;white-space:pre;line-height:1;font-family:'Liberation Sans',sans-serif;font-size:12.35px;color:#2f86a0;font-weight:400;">8</div><div style="position:absolute;left:640.11px;top:492.15px;white-space:pre;line-height:1;font-family:'Liberation Sans',sans-serif;font-size:12.35px;color:#2f86a0;font-weight:400;">$8.00</div><div style="position:absolute;left:754.61px;top:492.15px;white-space:pre;line-height:1;font-family:'Liberation Sans',sans-serif;font-size:12.35px;color:#2f86a0;font-weight:400;">$8.00</div><div style="position:absolute;left:841.53px;top:492.15px;white-space:pre;line-height:1;font-family:'Liberation Sans',sans-serif;font-size:12.35px;color:#2f86a0;font-weight:400;">$56.00</div><div style="position:absolute;left:53.70px;top:522.75px;white-space:pre;line-height:1;font-family:'Liberation Sans',sans-serif;font-size:12.35px;color:#2f86a0;font-weight:400;">Invoice 3-456-1 Data 9</div><div style="position:absolute;left:233.00px;top:522.75px;white-space:pre;line-height:1;font-family:'Liberation Sans',sans-serif;font-size:12.35px;color:#2f86a0;font-weight:400;">3-456-1</div><div style="position:absolute;left:347.50px;top:522.75px;white-space:pre;line-height:1;font-family:'Liberation Sans',sans-serif;font-size:12.35px;color:#2f86a0;font-weight:400;">9</div><div style="position:absolute;left:549.12px;top:516.95px;white-space:pre;line-height:1;font-family:'Liberation Sans',sans-serif;font-size:12.35px;color:#2f86a0;font-weight:400;">9</div><div style="position:absolute;left:640.11px;top:516.95px;white-space:pre;line-height:1;font-family:'Liberation Sans',sans-serif;font-size:12.35px;color:#2f86a0;font-weight:400;">$9.00</div><div style="position:absolute;left:754.61px;top:516.95px;white-space:pre;line-height:1;font-family:'Liberation Sans',sans-serif;font-size:12.35px;color:#2f86a0;font-weight:400;">$9.00</div><div style="position:absolute;left:841.53px;top:516.95px;white-space:pre;line-height:1;font-family:'Liberation Sans',sans-serif;font-size:12.35px;color:#2f86a0;font-weight:400;">$72.00</div><div style="position:absolute;left:53.70px;top:547.55px;white-space:pre;line-height:1;font-family:'Liberation Sans',sans-serif;font-size:12.35px;color:#2f86a0;font-weight:400;">Invoice 3-456-1 Data 10</div><div style="position:absolute;left:233.00px;top:547.55px;white-space:pre;line-height:1;font-family:'Liberation Sans',sans-serif;font-size:12.35px;color:#2f86a0;font-weight:400;">3-456-1</div><div style="position:absolute;left:347.50px;top:547.55px;white-space:pre;line-height:1;font-family:'Liberation Sans',sans-serif;font-size:12.35px;color:#2f86a0;font-weight:400;">10</div><div style="position:absolute;left:542.27px;top:541.75px;white-space:pre;line-height:1;font-family:'Liberation Sans',sans-serif;font-size:12.35px;color:#2f86a0;font-weight:400;">10</div><div style="position:absolute;left:633.23px;top:541.75px;white-space:pre;line-height:1;font-family:'Liberation Sans',sans-serif;font-size:12.35px;color:#2f86a0;font-weight:400;">$10.00</div><div style="position:absolute;left:747.73px;top:541.75px;white-space:pre;line-height:1;font-family:'Liberation Sans',sans-serif;font-size:12.35px;color:#2f86a0;font-weight:400;">$10.00</div><div style="position:absolute;left:841.53px;top:541.75px;white-space:pre;line-height:1;font-family:'Liberation Sans',sans-serif;font-size:12.35px;color:#2f86a0;font-weight:400;">$90.00</div><div style="position:absolute;left:53.70px;top:572.35px;white-space:pre;line-height:1;font-family:'Liberation Sans',sans-serif;font-size:12.35px;color:#2f86a0;font-weight:400;">Invoice 3-456-1 Data 11</div><div style="position:absolute;left:233.00px;top:572.35px;white-space:pre;line-height:1;font-family:'Liberation Sans',sans-serif;font-size:12.35px;color:#2f86a0;font-weight:400;">3-456-1</div><div style="position:absolute;left:347.50px;top:572.35px;white-space:pre;line-height:1;font-family:'Liberation Sans',sans-serif;font-size:12.35px;color:#2f86a0;font-weight:400;">11</div><div style="position:absolute;left:543.17px;top:566.55px;white-space:pre;line-height:1;font-family:'Liberation Sans',sans-serif;font-size:12.35px;color:#2f86a0;font-weight:400;">11</div><div style="position:absolute;left:634.16px;top:566.55px;white-space:pre;line-height:1;font-family:'Liberation Sans',sans-serif;font-size:12.35px;color:#2f86a0;font-weight:400;">$11.00</div><div style="position:absolute;left:748.66px;top:566.55px;white-space:pre;line-height:1;font-family:'Liberation Sans',sans-serif;font-size:12.35px;color:#2f86a0;font-weight:400;">$11.00</div><div style="position:absolute;left:835.60px;top:566.55px;white-space:pre;line-height:1;font-family:'Liberation Sans',sans-serif;font-size:12.35px;color:#2f86a0;font-weight:400;">$110.00</div><div style="position:absolute;left:53.70px;top:597.15px;white-space:pre;line-height:1;font-family:'Liberation Sans',sans-serif;font-size:12.35px;color:#2f86a0;font-weight:400;">Invoice 3-456-1 Data 12</div><div style="position:absolute;left:233.00px;top:597.15px;white-space:pre;line-height:1;font-family:'Liberation Sans',sans-serif;font-size:12.35px;color:#2f86a0;font-weight:400;">3-456-1</div><div style="position:absolute;left:347.50px;top:597.15px;white-space:pre;line-height:1;font-family:'Liberation Sans',sans-serif;font-size:12.35px;color:#2f86a0;font-weight:400;">12</div><div style="position:absolute;left:542.27px;top:591.35px;white-space:pre;line-height:1;font-family:'Liberation Sans',sans-serif;font-size:12.35px;color:#2f86a0;font-weight:400;">12</div><div style="position:absolute;left:633.23px;top:591.35px;white-space:pre;line-height:1;font-family:'Liberation Sans',sans-serif;font-size:12.35px;color:#2f86a0;font-weight:400;">$12.00</div><div style="position:absolute;left:747.73px;top:591.35px;white-space:pre;line-height:1;font-family:'Liberation Sans',sans-serif;font-size:12.35px;color:#2f86a0;font-weight:400;">$12.00</div><div style="position:absolute;left:834.67px;top:591.35px;white-space:pre;line-height:1;font-family:'Liberation Sans',sans-serif;font-size:12.35px;color:#2f86a0;font-weight:400;">$132.00</div><div style="position:absolute;left:53.70px;top:621.95px;white-space:pre;line-height:1;font-family:'Liberation Sans',sans-serif;font-size:12.35px;color:#2f86a0;font-weight:400;">Invoice 3-456-1 Data 13</div><div style="position:absolute;left:233.00px;top:621.95px;white-space:pre;line-height:1;font-family:'Liberation Sans',sans-serif;font-size:12.35px;color:#2f86a0;font-weight:400;">3-456-1</div><div style="position:absolute;left:347.50px;top:621.95px;white-space:pre;line-height:1;font-family:'Liberation Sans',sans-serif;font-size:12.35px;color:#2f86a0;font-weight:400;">13</div><div style="position:absolute;left:542.27px;top:616.15px;white-space:pre;line-height:1;font-family:'Liberation Sans',sans-serif;font-size:12.35px;color:#2f86a0;font-weight:400;">13</div><div style="position:absolute;left:633.23px;top:616.15px;white-space:pre;line-height:1;font-family:'Liberation Sans',sans-serif;font-size:12.35px;color:#2f86a0;font-weight:400;">$13.00</div><div style="position:absolute;left:747.73px;top:616.15px;white-space:pre;line-height:1;font-family:'Liberation Sans',sans-serif;font-size:12.35px;color:#2f86a0;font-weight:400;">$13.00</div><div style="position:absolute;left:834.67px;top:616.15px;white-space:pre;line-height:1;font-family:'Liberation Sans',sans-serif;font-size:12.35px;color:#2f86a0;font-weight:400;">$156.00</div><div style="position:absolute;left:53.70px;top:646.75px;white-space:pre;line-height:1;font-family:'Liberation Sans',sans-serif;font-size:12.35px;color:#2f86a0;font-weight:400;">Invoice 3-456-1 Data 14</div><div style="position:absolute;left:233.00px;top:646.75px;white-space:pre;line-height:1;font-family:'Liberation Sans',sans-serif;font-size:12.35px;color:#2f86a0;font-weight:400;">3-456-1</div><div style="position:absolute;left:347.50px;top:646.75px;white-space:pre;line-height:1;font-family:'Liberation Sans',sans-serif;font-size:12.35px;color:#2f86a0;font-weight:400;">14</div><div style="position:absolute;left:542.27px;top:640.95px;white-space:pre;line-height:1;font-family:'Liberation Sans',sans-serif;font-size:12.35px;color:#2f86a0;font-weight:400;">14</div><div style="position:absolute;left:633.23px;top:640.95px;white-space:pre;line-height:1;font-family:'Liberation Sans',sans-serif;font-size:12.35px;color:#2f86a0;font-weight:400;">$14.00</div><div style="position:absolute;left:747.73px;top:640.95px;white-space:pre;line-height:1;font-family:'Liberation Sans',sans-serif;font-size:12.35px;color:#2f86a0;font-weight:400;">$14.00</div><div style="position:absolute;left:834.67px;top:640.95px;white-space:pre;line-height:1;font-family:'Liberation Sans',sans-serif;font-size:12.35px;color:#2f86a0;font-weight:400;">$182.00</div><div style="position:absolute;left:53.70px;top:671.55px;white-space:pre;line-height:1;font-family:'Liberation Sans',sans-serif;font-size:12.35px;color:#2f86a0;font-weight:400;">Invoice 3-456-1 Data 15</div><div style="position:absolute;left:233.00px;top:671.55px;white-space:pre;line-height:1;font-family:'Liberation Sans',sans-serif;font-size:12.35px;color:#2f86a0;font-weight:400;">3-456-1</div><div style="position:absolute;left:347.50px;top:671.55px;white-space:pre;line-height:1;font-family:'Liberation Sans',sans-serif;font-size:12.35px;color:#2f86a0;font-weight:400;">15</div><div style="position:absolute;left:542.27px;top:665.75px;white-space:pre;line-height:1;font-family:'Liberation Sans',sans-serif;font-size:12.35px;color:#2f86a0;font-weight:400;">15</div><div style="position:absolute;left:633.23px;top:665.75px;white-space:pre;line-height:1;font-family:'Liberation Sans',sans-serif;font-size:12.35px;color:#2f86a0;font-weight:400;">$15.00</div><div style="position:absolute;left:747.73px;top:665.75px;white-space:pre;line-height:1;font-family:'Liberation Sans',sans-serif;font-size:12.35px;color:#2f86a0;font-weight:400;">$15.00</div><div style="position:absolute;left:834.67px;top:665.75px;white-space:pre;line-height:1;font-family:'Liberation Sans',sans-serif;font-size:12.35px;color:#2f86a0;font-weight:400;">$210.00</div><div style="position:absolute;left:53.70px;top:696.35px;white-space:pre;line-height:1;font-family:'Liberation Sans',sans-serif;font-size:12.35px;color:#2f86a0;font-weight:400;">Invoice 3-456-1 Data 16</div><div style="position:absolute;left:233.00px;top:696.35px;white-space:pre;line-height:1;font-family:'Liberation Sans',sans-serif;font-size:12.35px;color:#2f86a0;font-weight:400;">3-456-1</div><div style="position:absolute;left:347.50px;top:696.35px;white-space:pre;line-height:1;font-family:'Liberation Sans',sans-serif;font-size:12.35px;color:#2f86a0;font-weight:400;">16</div><div style="position:absolute;left:542.27px;top:690.55px;white-space:pre;line-height:1;font-family:'Liberation Sans',sans-serif;font-size:12.35px;color:#2f86a0;font-weight:400;">16</div><div style="position:absolute;left:633.23px;top:690.55px;white-space:pre;line-height:1;font-family:'Liberation Sans',sans-serif;font-size:12.35px;color:#2f86a0;font-weight:400;">$16.00</div><div style="position:absolute;left:747.73px;top:690.55px;white-space:pre;line-height:1;font-family:'Liberation Sans',sans-serif;font-size:12.35px;color:#2f86a0;font-weight:400;">$16.00</div><div style="position:absolute;left:834.67px;top:690.55px;white-space:pre;line-height:1;font-family:'Liberation Sans',sans-serif;font-size:12.35px;color:#2f86a0;font-weight:400;">$240.00</div><div style="position:absolute;left:53.70px;top:721.15px;white-space:pre;line-height:1;font-family:'Liberation Sans',sans-serif;font-size:12.35px;color:#2f86a0;font-weight:400;">Invoice 3-456-1 Data 17</div><div style="position:absolute;left:233.00px;top:721.15px;white-space:pre;line-height:1;font-family:'Liberation Sans',sans-serif;font-size:12.35px;color:#2f86a0;font-weight:400;">3-456-1</div><div style="position:absolute;left:347.50px;top:721.15px;white-space:pre;line-height:1;font-family:'Liberation Sans',sans-serif;font-size:12.35px;color:#2f86a0;font-weight:400;">17</div><div style="position:absolute;left:542.27px;top:715.35px;white-space:pre;line-height:1;font-family:'Liberation Sans',sans-serif;font-size:12.35px;color:#2f86a0;font-weight:400;">17</div><div style="position:absolute;left:633.23px;top:715.35px;white-space:pre;line-height:1;font-family:'Liberation Sans',sans-serif;font-size:12.35px;color:#2f86a0;font-weight:400;">$17.00</div><div style="position:absolute;left:747.73px;top:715.35px;white-space:pre;line-height:1;font-family:'Liberation Sans',sans-serif;font-size:12.35px;color:#2f86a0;font-weight:400;">$17.00</div><div style="position:absolute;left:834.67px;top:715.35px;white-space:pre;line-height:1;font-family:'Liberation Sans',sans-serif;font-size:12.35px;color:#2f86a0;font-weight:400;">$272.00</div><div style="position:absolute;left:53.70px;top:745.95px;white-space:pre;line-height:1;font-family:'Liberation Sans',sans-serif;font-size:12.35px;color:#2f86a0;font-weight:400;">Invoice 3-456-1 Data 18</div><div style="position:absolute;left:233.00px;top:745.95px;white-space:pre;line-height:1;font-family:'Liberation Sans',sans-serif;font-size:12.35px;color:#2f86a0;font-weight:400;">3-456-1</div><div style="position:absolute;left:347.50px;top:745.95px;white-space:pre;line-height:1;font-family:'Liberation Sans',sans-serif;font-size:12.35px;color:#2f86a0;font-weight:400;">18</div><div style="position:absolute;left:542.27px;top:740.15px;white-space:pre;line-height:1;font-family:'Liberation Sans',sans-serif;font-size:12.35px;color:#2f86a0;font-weight:400;">18</div><div style="position:absolute;left:633.23px;top:740.15px;white-space:pre;line-height:1;font-family:'Liberation Sans',sans-serif;font-size:12.35px;color:#2f86a0;font-weight:400;">$18.00</div><div style="position:absolute;left:747.73px;top:740.15px;white-space:pre;line-height:1;font-family:'Liberation Sans',sans-serif;font-size:12.35px;color:#2f86a0;font-weight:400;">$18.00</div><div style="position:absolute;left:834.67px;top:740.15px;white-space:pre;line-height:1;font-family:'Liberation Sans',sans-serif;font-size:12.35px;color:#2f86a0;font-weight:400;">$306.00</div><div style="position:absolute;left:53.70px;top:770.75px;white-space:pre;line-height:1;font-family:'Liberation Sans',sans-serif;font-size:12.35px;color:#2f86a0;font-weight:400;">Invoice 3-456-1 Data 19</div><div style="position:absolute;left:233.00px;top:770.75px;white-space:pre;line-height:1;font-family:'Liberation Sans',sans-serif;font-size:12.35px;color:#2f86a0;font-weight:400;">3-456-1</div><div style="position:absolute;left:347.50px;top:770.75px;white-space:pre;line-height:1;font-family:'Liberation Sans',sans-serif;font-size:12.35px;color:#2f86a0;font-weight:400;">19</div><div style="position:absolute;left:542.27px;top:764.95px;white-space:pre;line-height:1;font-family:'Liberation Sans',sans-serif;font-size:12.35px;color:#2f86a0;font-weight:400;">19</div><div style="position:absolute;left:633.23px;top:764.95px;white-space:pre;line-height:1;font-family:'Liberation Sans',sans-serif;font-size:12.35px;color:#2f86a0;font-weight:400;">$19.00</div><div style="position:absolute;left:747.73px;top:764.95px;white-space:pre;line-height:1;font-family:'Liberation Sans',sans-serif;font-size:12.35px;color:#2f86a0;font-weight:400;">$19.00</div><div style="position:absolute;left:834.67px;top:764.95px;white-space:pre;line-height:1;font-family:'Liberation Sans',sans-serif;font-size:12.35px;color:#2f86a0;font-weight:400;">$342.00</div><div style="position:absolute;left:53.70px;top:795.55px;white-space:pre;line-height:1;font-family:'Liberation Sans',sans-serif;font-size:12.35px;color:#2f86a0;font-weight:400;">Invoice 3-456-1 Data 20</div><div style="position:absolute;left:233.00px;top:795.55px;white-space:pre;line-height:1;font-family:'Liberation Sans',sans-serif;font-size:12.35px;color:#2f86a0;font-weight:400;">3-456-1</div><div style="position:absolute;left:347.50px;top:795.55px;white-space:pre;line-height:1;font-family:'Liberation Sans',sans-serif;font-size:12.35px;color:#2f86a0;font-weight:400;">20</div><div style="position:absolute;left:542.27px;top:789.75px;white-space:pre;line-height:1;font-family:'Liberation Sans',sans-serif;font-size:12.35px;color:#2f86a0;font-weight:400;">20</div><div style="position:absolute;left:633.23px;top:789.75px;white-space:pre;line-height:1;font-family:'Liberation Sans',sans-serif;font-size:12.35px;color:#2f86a0;font-weight:400;">$20.00</div><div style="position:absolute;left:747.73px;top:789.75px;white-space:pre;line-height:1;font-family:'Liberation Sans',sans-serif;font-size:12.35px;color:#2f86a0;font-weight:400;">$20.00</div><div style="position:absolute;left:834.67px;top:789.75px;white-space:pre;line-height:1;font-family:'Liberation Sans',sans-serif;font-size:12.35px;color:#2f86a0;font-weight:400;">$380.00</div><div style="position:absolute;left:53.70px;top:820.35px;white-space:pre;line-height:1;font-family:'Liberation Sans',sans-serif;font-size:12.35px;color:#2f86a0;font-weight:400;">Invoice 3-456-1 Data 21</div><div style="position:absolute;left:233.00px;top:820.35px;white-space:pre;line-height:1;font-family:'Liberation Sans',sans-serif;font-size:12.35px;color:#2f86a0;font-weight:400;">3-456-1</div><div style="position:absolute;left:347.50px;top:820.35px;white-space:pre;line-height:1;font-family:'Liberation Sans',sans-serif;font-size:12.35px;color:#2f86a0;font-weight:400;">21</div><div style="position:absolute;left:542.27px;top:814.55px;white-space:pre;line-height:1;font-family:'Liberation Sans',sans-serif;font-size:12.35px;color:#2f86a0;font-weight:400;">21</div><div style="position:absolute;left:633.23px;top:814.55px;white-space:pre;line-height:1;font-family:'Liberation Sans',sans-serif;font-size:12.35px;color:#2f86a0;font-weight:400;">$21.00</div><div style="position:absolute;left:747.73px;top:814.55px;white-space:pre;line-height:1;font-family:'Liberation Sans',sans-serif;font-size:12.35px;color:#2f86a0;font-weight:400;">$21.00</div><div style="position:absolute;left:834.67px;top:814.55px;white-space:pre;line-height:1;font-family:'Liberation Sans',sans-serif;font-size:12.35px;color:#2f86a0;font-weight:400;">$420.00</div><div style="position:absolute;left:53.70px;top:845.15px;white-space:pre;line-height:1;font-family:'Liberation Sans',sans-serif;font-size:12.35px;color:#2f86a0;font-weight:400;">Invoice 3-456-1 Data 22</div><div style="position:absolute;left:233.00px;top:845.15px;white-space:pre;line-height:1;font-family:'Liberation Sans',sans-serif;font-size:12.35px;color:#2f86a0;font-weight:400;">3-456-1</div><div style="position:absolute;left:347.50px;top:845.15px;white-space:pre;line-height:1;font-family:'Liberation Sans',sans-serif;font-size:12.35px;color:#2f86a0;font-weight:400;">22</div><div style="position:absolute;left:542.27px;top:839.35px;white-space:pre;line-height:1;font-family:'Liberation Sans',sans-serif;font-size:12.35px;color:#2f86a0;font-weight:400;">22</div><div style="position:absolute;left:633.23px;top:839.35px;white-space:pre;line-height:1;font-family:'Liberation Sans',sans-serif;font-size:12.35px;color:#2f86a0;font-weight:400;">$22.00</div><div style="position:absolute;left:747.73px;top:839.35px;white-space:pre;line-height:1;font-family:'Liberation Sans',sans-serif;font-size:12.35px;color:#2f86a0;font-weight:400;">$22.00</div><div style="position:absolute;left:834.67px;top:839.35px;white-space:pre;line-height:1;font-family:'Liberation Sans',sans-serif;font-size:12.35px;color:#2f86a0;font-weight:400;">$462.00</div><div style="position:absolute;left:53.70px;top:869.95px;white-space:pre;line-height:1;font-family:'Liberation Sans',sans-serif;font-size:12.35px;color:#2f86a0;font-weight:400;">Invoice 3-456-1 Data 23</div><div style="position:absolute;left:233.00px;top:869.95px;white-space:pre;line-height:1;font-family:'Liberation Sans',sans-serif;font-size:12.35px;color:#2f86a0;font-weight:400;">3-456-1</div><div style="position:absolute;left:347.50px;top:869.95px;white-space:pre;line-height:1;font-family:'Liberation Sans',sans-serif;font-size:12.35px;color:#2f86a0;font-weight:400;">23</div><div style="position:absolute;left:542.27px;top:864.15px;white-space:pre;line-height:1;font-family:'Liberation Sans',sans-serif;font-size:12.35px;color:#2f86a0;font-weight:400;">23</div><div style="position:absolute;left:633.23px;top:864.15px;white-space:pre;line-height:1;font-family:'Liberation Sans',sans-serif;font-size:12.35px;color:#2f86a0;font-weight:400;">$23.00</div><div style="position:absolute;left:747.73px;top:864.15px;white-space:pre;line-height:1;font-family:'Liberation Sans',sans-serif;font-size:12.35px;color:#2f86a0;font-weight:400;">$23.00</div><div style="position:absolute;left:834.67px;top:864.15px;white-space:pre;line-height:1;font-family:'Liberation Sans',sans-serif;font-size:12.35px;color:#2f86a0;font-weight:400;">$506.00</div><div style="position:absolute;left:53.70px;top:894.75px;white-space:pre;line-height:1;font-family:'Liberation Sans',sans-serif;font-size:12.35px;color:#2f86a0;font-weight:400;">Invoice 3-456-1 Data 24</div><div style="position:absolute;left:233.00px;top:894.75px;white-space:pre;line-height:1;font-family:'Liberation Sans',sans-serif;font-size:12.35px;color:#2f86a0;font-weight:400;">3-456-1</div><div style="position:absolute;left:347.50px;top:894.75px;white-space:pre;line-height:1;font-family:'Liberation Sans',sans-serif;font-size:12.35px;color:#2f86a0;font-weight:400;">24</div><div style="position:absolute;left:542.27px;top:888.95px;white-space:pre;line-height:1;font-family:'Liberation Sans',sans-serif;font-size:12.35px;color:#2f86a0;font-weight:400;">24</div><div style="position:absolute;left:633.23px;top:888.95px;white-space:pre;line-height:1;font-family:'Liberation Sans',sans-serif;font-size:12.35px;color:#2f86a0;font-weight:400;">$24.00</div><div style="position:absolute;left:747.73px;top:888.95px;white-space:pre;line-height:1;font-family:'Liberation Sans',sans-serif;font-size:12.35px;color:#2f86a0;font-weight:400;">$24.00</div><div style="position:absolute;left:834.67px;top:888.95px;white-space:pre;line-height:1;font-family:'Liberation Sans',sans-serif;font-size:12.35px;color:#2f86a0;font-weight:400;">$552.00</div><div style="position:absolute;left:53.70px;top:919.55px;white-space:pre;line-height:1;font-family:'Liberation Sans',sans-serif;font-size:12.35px;color:#2f86a0;font-weight:400;">Invoice 3-456-1 Data 25</div><div style="position:absolute;left:224.00px;top:919.55px;white-space:pre;line-height:1;font-family:'Liberation Sans',sans-serif;font-size:12.35px;color:#2f86a0;font-weight:400;">3-456-1</div><div style="position:absolute;left:347.50px;top:919.55px;white-space:pre;line-height:1;font-family:'Liberation Sans',sans-serif;font-size:12.35px;color:#2f86a0;font-weight:400;">25</div><div style="position:absolute;left:542.27px;top:913.75px;white-space:pre;line-height:1;font-family:'Liberation Sans',sans-serif;font-size:12.35px;color:#2f86a0;font-weight:400;">25</div><div style="position:absolute;left:633.23px;top:913.75px;white-space:pre;line-height:1;font-family:'Liberation Sans',sans-serif;font-size:12.35px;color:#2f86a0;font-weight:400;">$25.00</div><div style="position:absolute;left:747.73px;top:913.75px;white-space:pre;line-height:1;font-family:'Liberation Sans',sans-serif;font-size:12.35px;color:#2f86a0;font-weight:400;">$25.00</div><div style="position:absolute;left:834.67px;top:913.75px;white-space:pre;line-height:1;font-family:'Liberation Sans',sans-serif;font-size:12.35px;color:#2f86a0;font-weight:400;">$600.00</div><div style="position:absolute;left:53.70px;top:944.35px;white-space:pre;line-height:1;font-family:'Liberation Sans',sans-serif;font-size:12.35px;color:#2f86a0;font-weight:400;">Invoice 3-456-2 Data 1</div><div style="position:absolute;left:233.00px;top:944.35px;white-space:pre;line-height:1;font-family:'Liberation Sans',sans-serif;font-size:12.35px;color:#2f86a0;font-weight:400;">3-456-2</div><div style="position:absolute;left:347.50px;top:944.35px;white-space:pre;line-height:1;font-family:'Liberation Sans',sans-serif;font-size:12.35px;color:#2f86a0;font-weight:400;">Z4567</div><div style="position:absolute;left:542.27px;top:938.55px;white-space:pre;line-height:1;font-family:'Liberation Sans',sans-serif;font-size:12.35px;color:#2f86a0;font-weight:400;">39</div><div style="position:absolute;left:640.11px;top:938.55px;white-space:pre;line-height:1;font-family:'Liberation Sans',sans-serif;font-size:12.35px;color:#2f86a0;font-weight:400;">$5.00</div><div style="position:absolute;left:834.67px;top:938.55px;white-space:pre;line-height:1;font-family:'Liberation Sans',sans-serif;font-size:12.35px;color:#2f86a0;font-weight:400;">$195.00</div><div style="position:absolute;left:53.70px;top:969.15px;white-space:pre;line-height:1;font-family:'Liberation Sans',sans-serif;font-size:12.35px;color:#2f86a0;font-weight:400;">Invoice 3-456-2 Data 2</div><div style="position:absolute;left:233.00px;top:969.15px;white-space:pre;line-height:1;font-family:'Liberation Sans',sans-serif;font-size:12.35px;color:#2f86a0;font-weight:400;">3-456-2</div><div style="position:absolute;left:347.50px;top:969.15px;white-space:pre;line-height:1;font-family:'Liberation Sans',sans-serif;font-size:12.35px;color:#2f86a0;font-weight:400;">Z4568</div><div style="position:absolute;left:542.27px;top:963.35px;white-space:pre;line-height:1;font-family:'Liberation Sans',sans-serif;font-size:12.35px;color:#2f86a0;font-weight:400;">40</div><div style="position:absolute;left:640.11px;top:963.35px;white-space:pre;line-height:1;font-family:'Liberation Sans',sans-serif;font-size:12.35px;color:#2f86a0;font-weight:400;">$4.00</div><div style="position:absolute;left:754.61px;top:963.35px;white-space:pre;line-height:1;font-family:'Liberation Sans',sans-serif;font-size:12.35px;color:#2f86a0;font-weight:400;">$5.00</div><div style="position:absolute;left:834.67px;top:963.35px;white-space:pre;line-height:1;font-family:'Liberation Sans',sans-serif;font-size:12.35px;color:#2f86a0;font-weight:400;">$155.00</div><div style="position:absolute;left:53.70px;top:993.95px;white-space:pre;line-height:1;font-family:'Liberation Sans',sans-serif;font-size:12.35px;color:#2f86a0;font-weight:400;">Invoice 3-456-2 Data 3</div><div style="position:absolute;left:233.00px;top:993.95px;white-space:pre;line-height:1;font-family:'Liberation Sans',sans-serif;font-size:12.35px;color:#2f86a0;font-weight:400;">3-456-2</div><div style="position:absolute;left:347.50px;top:993.95px;white-space:pre;line-height:1;font-family:'Liberation Sans',sans-serif;font-size:12.35px;color:#2f86a0;font-weight:400;">Z4569</div><div style="position:absolute;left:542.27px;top:988.15px;white-space:pre;line-height:1;font-family:'Liberation Sans',sans-serif;font-size:12.35px;color:#2f86a0;font-weight:400;">30</div><div style="position:absolute;left:640.11px;top:988.15px;white-space:pre;line-height:1;font-family:'Liberation Sans',sans-serif;font-size:12.35px;color:#2f86a0;font-weight:400;">$6.00</div><div style="position:absolute;left:754.61px;top:988.15px;white-space:pre;line-height:1;font-family:'Liberation Sans',sans-serif;font-size:12.35px;color:#2f86a0;font-weight:400;">$7.00</div><div style="position:absolute;left:834.67px;top:988.15px;white-space:pre;line-height:1;font-family:'Liberation Sans',sans-serif;font-size:12.35px;color:#2f86a0;font-weight:400;">$173.00</div><div style="position:absolute;left:53.70px;top:1018.75px;white-space:pre;line-height:1;font-family:'Liberation Sans',sans-serif;font-size:12.35px;color:#2f86a0;font-weight:400;">Invoice 3-456-2 Data 4</div><div style="position:absolute;left:233.00px;top:1018.75px;white-space:pre;line-height:1;font-family:'Liberation Sans',sans-serif;font-size:12.35px;color:#2f86a0;font-weight:400;">3-456-2</div><div style="position:absolute;left:347.50px;top:1018.75px;white-space:pre;line-height:1;font-family:'Liberation Sans',sans-serif;font-size:12.35px;color:#2f86a0;font-weight:400;">Z4570</div><div style="position:absolute;left:542.27px;top:1012.95px;white-space:pre;line-height:1;font-family:'Liberation Sans',sans-serif;font-size:12.35px;color:#2f86a0;font-weight:400;">40</div><div style="position:absolute;left:640.11px;top:1012.95px;white-space:pre;line-height:1;font-family:'Liberation Sans',sans-serif;font-size:12.35px;color:#2f86a0;font-weight:400;">$7.00</div><div style="position:absolute;left:834.67px;top:1012.95px;white-space:pre;line-height:1;font-family:'Liberation Sans',sans-serif;font-size:12.35px;color:#2f86a0;font-weight:400;">$280.00</div><div style="position:absolute;left:53.70px;top:1043.55px;white-space:pre;line-height:1;font-family:'Liberation Sans',sans-serif;font-size:12.35px;color:#2f86a0;font-weight:400;">Invoice 3-456-2 Data 5</div><div style="position:absolute;left:233.00px;top:1043.55px;white-space:pre;line-height:1;font-family:'Liberation Sans',sans-serif;font-size:12.35px;color:#2f86a0;font-weight:400;">3-456-2</div><div style="position:absolute;left:347.50px;top:1043.55px;white-space:pre;line-height:1;font-family:'Liberation Sans',sans-serif;font-size:12.35px;color:#2f86a0;font-weight:400;">Z4571</div><div style="position:absolute;left:542.27px;top:1037.75px;white-space:pre;line-height:1;font-family:'Liberation Sans',sans-serif;font-size:12.35px;color:#2f86a0;font-weight:400;">10</div><div style="position:absolute;left:640.11px;top:1037.75px;white-space:pre;line-height:1;font-family:'Liberation Sans',sans-serif;font-size:12.35px;color:#2f86a0;font-weight:400;">$4.00</div><div style="position:absolute;left:841.53px;top:1037.75px;white-space:pre;line-height:1;font-family:'Liberation Sans',sans-serif;font-size:12.35px;color:#2f86a0;font-weight:400;">$40.00</div><div style="position:absolute;left:53.70px;top:1068.35px;white-space:pre;line-height:1;font-family:'Liberation Sans',sans-serif;font-size:12.35px;color:#2f86a0;font-weight:400;">Invoice 3-456-2 Data 6</div><div style="position:absolute;left:233.00px;top:1068.35px;white-space:pre;line-height:1;font-family:'Liberation Sans',sans-serif;font-size:12.35px;color:#2f86a0;font-weight:400;">3-456-2</div><div style="position:absolute;left:347.50px;top:1068.35px;white-space:pre;line-height:1;font-family:'Liberation Sans',sans-serif;font-size:12.35px;color:#2f86a0;font-weight:400;">Z4572</div><div style="position:absolute;left:549.12px;top:1062.55px;white-space:pre;line-height:1;font-family:'Liberation Sans',sans-serif;font-size:12.35px;color:#2f86a0;font-weight:400;">5</div><div style="position:absolute;left:640.11px;top:1062.55px;white-space:pre;line-height:1;font-family:'Liberation Sans',sans-serif;font-size:12.35px;color:#2f86a0;font-weight:400;">$8.00</div><div style="position:absolute;left:841.53px;top:1062.55px;white-space:pre;line-height:1;font-family:'Liberation Sans',sans-serif;font-size:12.35px;color:#2f86a0;font-weight:400;">$40.00</div><div style="position:absolute;left:53.70px;top:1093.15px;white-space:pre;line-height:1;font-family:'Liberation Sans',sans-serif;font-size:12.35px;color:#2f86a0;font-weight:400;">Invoice 3-456-2 Data 7</div><div style="position:absolute;left:233.00px;top:1093.15px;white-space:pre;line-height:1;font-family:'Liberation Sans',sans-serif;font-size:12.35px;color:#2f86a0;font-weight:400;">3-456-2</div><div style="position:absolute;left:347.50px;top:1093.15px;white-space:pre;line-height:1;font-family:'Liberation Sans',sans-serif;font-size:12.35px;color:#2f86a0;font-weight:400;">Z4573</div><div style="position:absolute;left:542.27px;top:1087.35px;white-space:pre;line-height:1;font-family:'Liberation Sans',sans-serif;font-size:12.35px;color:#2f86a0;font-weight:400;">70</div><div style="position:absolute;left:640.11px;top:1087.35px;white-space:pre;line-height:1;font-family:'Liberation Sans',sans-serif;font-size:12.35px;color:#2f86a0;font-weight:400;">$6.00</div><div style="position:absolute;left:834.67px;top:1087.35px;white-space:pre;line-height:1;font-family:'Liberation Sans',sans-serif;font-size:12.35px;color:#2f86a0;font-weight:400;">$420.00</div><div style="position:absolute;left:95.30px;top:1116.93px;white-space:pre;line-height:1;font-family:'Liberation Sans',sans-serif;font-size:13.2px;color:#ffffff;font-weight:400;transform:scaleX(1.0367);transform-origin:0 0;">How to use the Invoice Tracker</div><div style="position:absolute;left:308.00px;top:1116.93px;white-space:pre;line-height:1;font-family:'Liberation Sans',sans-serif;font-size:13.2px;color:#ffffff;font-weight:400;transform:scaleX(1.0288);transform-origin:0 0;">Invoice</div><div style="position:absolute;left:372.00px;top:1116.93px;white-space:pre;line-height:1;font-family:'Liberation Sans',sans-serif;font-size:13.2px;color:#1b3d48;font-weight:400;transform:scaleX(1.0272);transform-origin:0 0;">Customers</div><div style="position:absolute;left:459.00px;top:1116.93px;white-space:pre;line-height:1;font-family:'Liberation Sans',sans-serif;font-size:13.2px;color:#1b3d48;font-weight:400;transform:scaleX(1.0655);transform-origin:0 0;">Invoices - Main</div><div style="position:absolute;left:572.80px;top:1116.93px;white-space:pre;line-height:1;font-family:'Liberation Sans',sans-serif;font-size:13.2px;color:#217346;font-weight:700;transform:scaleX(1.0069);transform-origin:0 0;">Invoice Details</div><div style="position:absolute;left:3.70px;top:1141.84px;white-space:pre;line-height:1;font-family:'Liberation Sans',sans-serif;font-size:12px;color:#6a6a6a;font-weight:400;transform:scaleX(0.8332);transform-origin:0 0;">Ready</div><div style="position:absolute;left:1886.60px;top:1142.34px;white-space:pre;line-height:1;font-family:'Liberation Sans',sans-serif;font-size:12px;color:#666;font-weight:400;transform:scaleX(0.7947);transform-origin:0 0;">100%</div>
<div style="position:absolute;left:0;top:0;width:1913px;height:1114px;overflow:hidden"><div style="position:absolute;left:53.70px;top:1117.95px;white-space:pre;line-height:1;font-family:'Liberation Sans',sans-serif;font-size:12.35px;color:#2f86a0;font-weight:400;">Invoice 3-456-2 Data 8</div><div style="position:absolute;left:233.00px;top:1117.95px;white-space:pre;line-height:1;font-family:'Liberation Sans',sans-serif;font-size:12.35px;color:#2f86a0;font-weight:400;">3-456-2</div><div style="position:absolute;left:347.50px;top:1117.95px;white-space:pre;line-height:1;font-family:'Liberation Sans',sans-serif;font-size:12.35px;color:#2f86a0;font-weight:400;">Z4574</div><div style="position:absolute;left:542.27px;top:1112.15px;white-space:pre;line-height:1;font-family:'Liberation Sans',sans-serif;font-size:12.35px;color:#2f86a0;font-weight:400;">25</div><div style="position:absolute;left:640.11px;top:1112.15px;white-space:pre;line-height:1;font-family:'Liberation Sans',sans-serif;font-size:12.35px;color:#2f86a0;font-weight:400;">$4.00</div><div style="position:absolute;left:834.67px;top:1112.15px;white-space:pre;line-height:1;font-family:'Liberation Sans',sans-serif;font-size:12.35px;color:#2f86a0;font-weight:400;">$100.00</div></div>
</body></html>
